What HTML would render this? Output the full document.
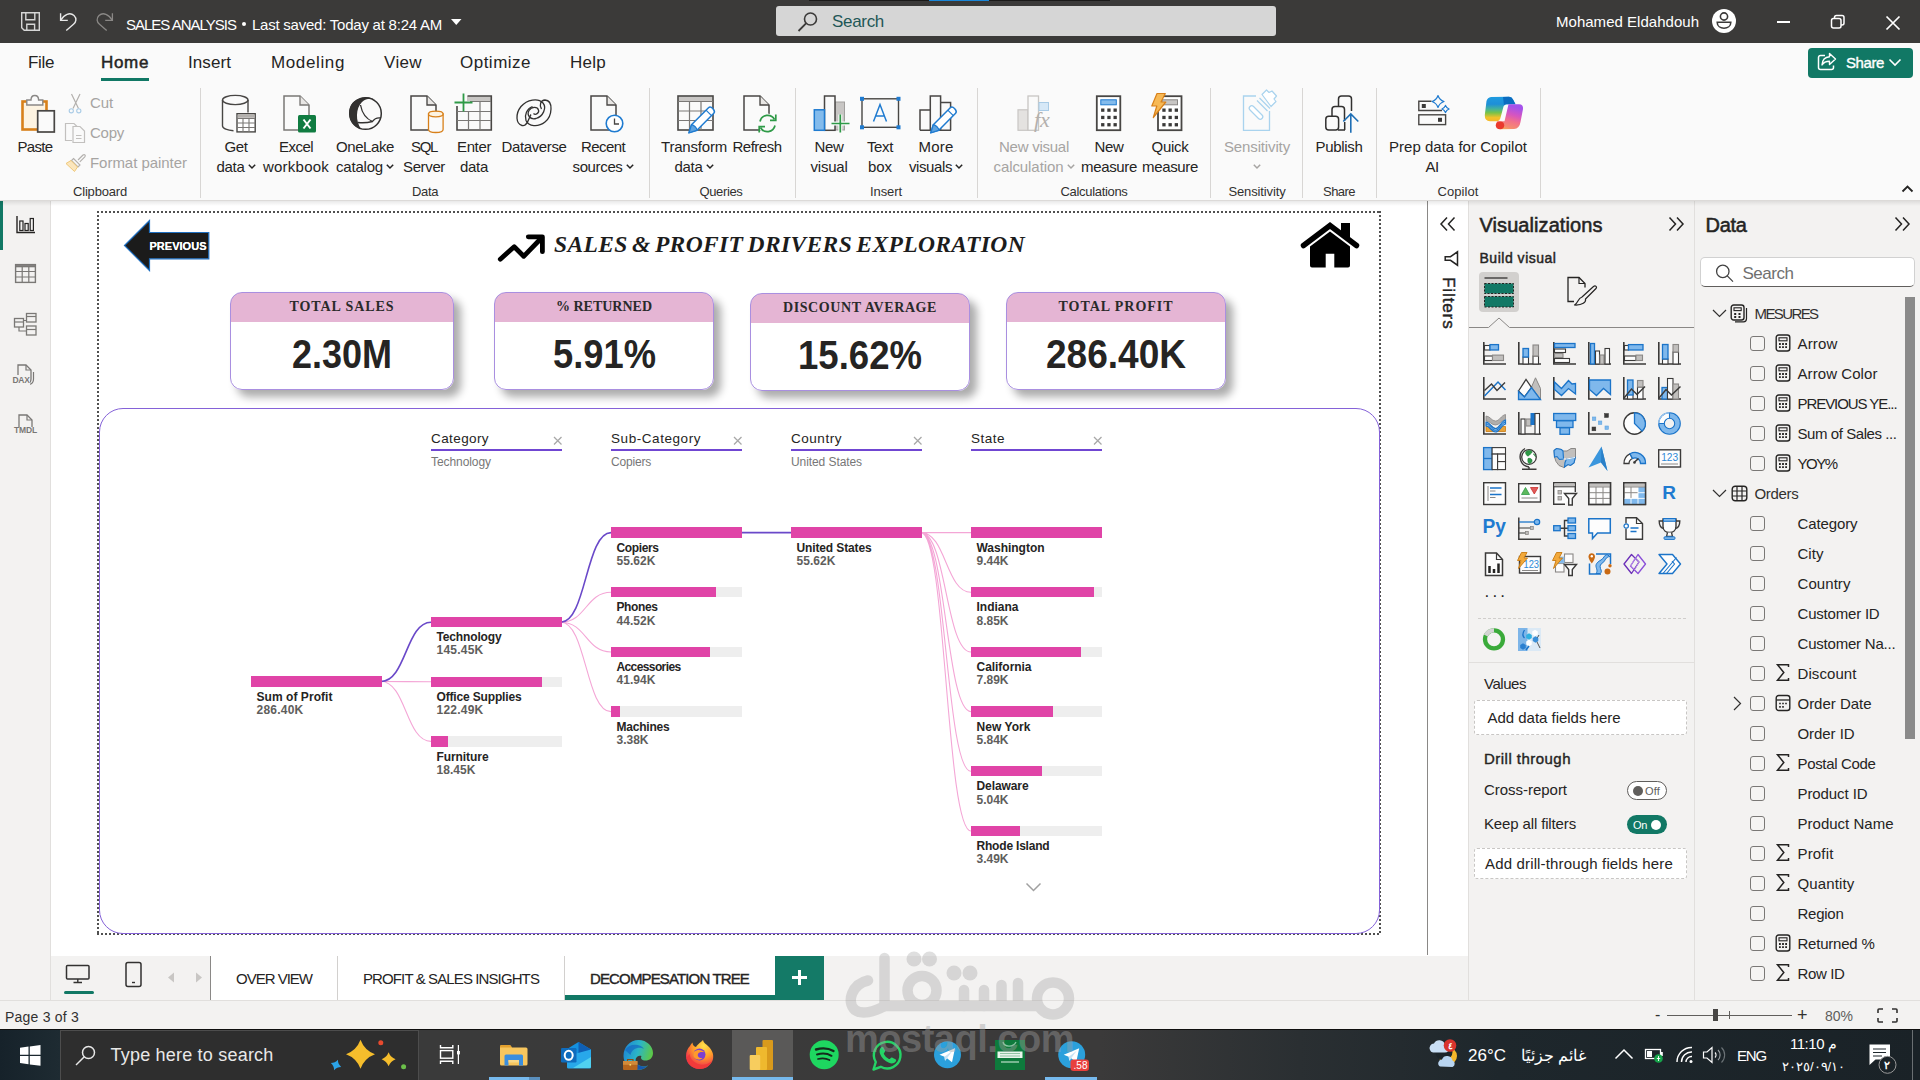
<!DOCTYPE html>
<html><head><meta charset="utf-8"><title>Power BI</title>
<style>
html,body{margin:0;padding:0;}
body{width:1920px;height:1080px;overflow:hidden;position:relative;background:#fff;font-family:"Liberation Sans",sans-serif;}
div,svg{box-sizing:border-box;}
svg{overflow:visible;}
</style></head><body>
<div style="position:absolute;left:0px;top:0px;width:1920px;height:43px;background:#3b3a39;"></div>
<div style="position:absolute;left:809px;top:0px;width:301px;height:1px;background:#1b1a19;"></div>
<div style="position:absolute;left:929px;top:0px;width:60px;height:1px;background:#1a86d8;"></div>
<svg style="position:absolute;left:0px;top:0px;" width="140" height="43" viewBox="0 0 140 43"><path d="M21.700 12.800H39.300V30.200H24.200L21.700 27.700Z" fill="none" stroke="#d6d6d6" stroke-width="1.400" stroke-linejoin="miter"/><path d="M25.800 12.800V19.800H34.800V12.800M26.800 30.200V24.300H34.600V30.200" fill="none" stroke="#d6d6d6" stroke-width="1.400"/><path d="M60.600 13.200V20.400H67.800" fill="none" stroke="#e8e8e8" stroke-width="1.400"/><path d="M60.800 20.200C64 14.500 70 11.700 74 15.500C77 18.500 76.200 22 73.500 24.300L66.300 30.500" fill="none" stroke="#e8e8e8" stroke-width="1.400"/><path d="M112.400 13.200V20.400H105.200" fill="none" stroke="#8a8886" stroke-width="1.300"/><path d="M112.200 20.200C109 14.500 103 11.700 99 15.500C96 18.500 96.800 22 99.500 24.300L106.700 30.500" fill="none" stroke="#8a8886" stroke-width="1.300"/></svg>
<div style="position:absolute;top:14.5px;font-size:15px;line-height:20px;color:#fff;white-space:pre;letter-spacing:-0.997px;left:126.0px;">SALES ANALYSIS</div>
<div style="position:absolute;left:242px;top:22px;width:4px;height:4px;background:#fff;border-radius:2px;"></div>
<div style="position:absolute;top:14.5px;font-size:15px;line-height:20px;color:#fff;white-space:pre;letter-spacing:-0.233px;left:252.0px;">Last saved: Today at 8:24 AM</div>
<svg style="position:absolute;left:451px;top:19px;" width="11" height="7" viewBox="0 0 11 7"><path d="M0 0h10.5L5.25 6z" fill="#fff"/></svg>
<div style="position:absolute;left:776px;top:6px;width:500px;height:30px;background:#d6d6d6;border-radius:3px;"></div>
<svg style="position:absolute;left:796px;top:10px;" width="24" height="24" viewBox="0 0 24 24"><circle cx="14.5" cy="9" r="6" fill="none" stroke="#3b3a39" stroke-width="1.6"/><path d="M10.3 13.2L2.5 21" stroke="#3b3a39" stroke-width="1.8" fill="none"/></svg>
<div style="position:absolute;top:11.0px;font-size:17px;line-height:22px;color:#1f5757;white-space:pre;letter-spacing:-0.311px;left:832.0px;">Search</div>
<div style="position:absolute;top:12.0px;font-size:15px;line-height:20px;color:#fff;white-space:pre;letter-spacing:0.023px;left:1556.0px;">Mohamed Eldahdouh</div>
<svg style="position:absolute;left:1710px;top:7px;" width="28" height="28" viewBox="0 0 28 28"><circle cx="14" cy="14" r="12" fill="#fff"/><circle cx="14" cy="9.5" r="3.6" fill="none" stroke="#3b3a39" stroke-width="1.6"/><path d="M7.2 15.2h13.6c0 8-13.6 8-13.6 0z" fill="none" stroke="#3b3a39" stroke-width="1.6"/></svg>
<div style="position:absolute;left:1777px;top:21.3px;width:13px;height:1.4px;background:#fff;"></div>
<svg style="position:absolute;left:1830px;top:14px;" width="16" height="16" viewBox="0 0 16 16"><rect x="1.5" y="4.5" width="9.5" height="9.5" rx="2" fill="none" stroke="#fff" stroke-width="1.5"/><path d="M4.5 4.5V3.5a2 2 0 0 1 2-2h5.5a2 2 0 0 1 2 2V9a2 2 0 0 1-2 2h-1" fill="none" stroke="#fff" stroke-width="1.5"/></svg>
<svg style="position:absolute;left:1885px;top:15px;" width="16" height="16" viewBox="0 0 16 16"><path d="M1.5 1.5l13 13M14.5 1.5l-13 13" stroke="#fff" stroke-width="1.7"/></svg>
<div style="position:absolute;left:0px;top:43px;width:1920px;height:157px;background:#fafafa;"></div>
<div style="position:absolute;top:52.0px;font-size:17px;line-height:22px;color:#252423;white-space:pre;letter-spacing:-0.348px;left:28.0px;">File</div>
<div style="position:absolute;top:52.0px;font-size:17px;line-height:22px;color:#252423;white-space:pre;-webkit-text-stroke:0.5px #252423;letter-spacing:0.663px;left:101.0px;">Home</div>
<div style="position:absolute;top:52.0px;font-size:17px;line-height:22px;color:#252423;white-space:pre;letter-spacing:0.080px;left:188.0px;">Insert</div>
<div style="position:absolute;top:52.0px;font-size:17px;line-height:22px;color:#252423;white-space:pre;letter-spacing:0.627px;left:271.0px;">Modeling</div>
<div style="position:absolute;top:52.0px;font-size:17px;line-height:22px;color:#252423;white-space:pre;letter-spacing:0.365px;left:384.0px;">View</div>
<div style="position:absolute;top:52.0px;font-size:17px;line-height:22px;color:#252423;white-space:pre;letter-spacing:0.491px;left:460.0px;">Optimize</div>
<div style="position:absolute;top:52.0px;font-size:17px;line-height:22px;color:#252423;white-space:pre;letter-spacing:0.259px;left:570.0px;">Help</div>
<div style="position:absolute;left:101px;top:78px;width:48px;height:3px;background:#117865;"></div>
<div style="position:absolute;left:1808px;top:48px;width:105px;height:29.5px;background:#117865;border-radius:4px;"></div>
<svg style="position:absolute;left:1816px;top:52px;" width="22" height="20" viewBox="0 0 22 20"><path d="M9 3.5H4.5a2 2 0 0 0-2 2v10a2 2 0 0 0 2 2h11a2 2 0 0 0 2-2v-2" fill="none" stroke="#fff" stroke-width="1.5"/><path d="M13.5 1.5l6 5.5-6 5.5V9.2C9.5 9.2 7.5 10.5 6 13c.3-5 3-8 7.500-8.300z" fill="none" stroke="#fff" stroke-width="1.4" stroke-linejoin="round"/></svg>
<div style="position:absolute;top:52.5px;font-size:15px;line-height:20px;color:#fff;white-space:pre;-webkit-text-stroke:0.35px #fff;letter-spacing:-0.405px;left:1846.0px;">Share</div>
<svg style="position:absolute;left:1888px;top:58px;" width="14" height="9" viewBox="0 0 14 9"><path d="M1.5 1.5l5.5 5.5 5.500-5.500" fill="none" stroke="#fff" stroke-width="1.6"/></svg>
<div style="position:absolute;left:200px;top:88px;width:1px;height:110px;background:#d8d6d4;"></div>
<div style="position:absolute;left:649px;top:88px;width:1px;height:110px;background:#d8d6d4;"></div>
<div style="position:absolute;left:795px;top:88px;width:1px;height:110px;background:#d8d6d4;"></div>
<div style="position:absolute;left:977px;top:88px;width:1px;height:110px;background:#d8d6d4;"></div>
<div style="position:absolute;left:1210px;top:88px;width:1px;height:110px;background:#d8d6d4;"></div>
<div style="position:absolute;left:1302px;top:88px;width:1px;height:110px;background:#d8d6d4;"></div>
<div style="position:absolute;left:1376px;top:88px;width:1px;height:110px;background:#d8d6d4;"></div>
<div style="position:absolute;left:1540px;top:88px;width:1px;height:110px;background:#d8d6d4;"></div>
<div style="position:absolute;top:182.5px;font-size:13px;line-height:17px;color:#323130;white-space:pre;letter-spacing:-0.182px;left:73.0px;">Clipboard</div>
<div style="position:absolute;top:182.5px;font-size:13px;line-height:17px;color:#323130;white-space:pre;letter-spacing:-0.365px;left:412.0px;">Data</div>
<div style="position:absolute;top:182.5px;font-size:13px;line-height:17px;color:#323130;white-space:pre;letter-spacing:-0.360px;left:699.5px;">Queries</div>
<div style="position:absolute;top:182.5px;font-size:13px;line-height:17px;color:#323130;white-space:pre;letter-spacing:-0.086px;left:870.0px;">Insert</div>
<div style="position:absolute;top:182.5px;font-size:13px;line-height:17px;color:#323130;white-space:pre;letter-spacing:-0.318px;left:1060.5px;">Calculations</div>
<div style="position:absolute;top:182.5px;font-size:13px;line-height:17px;color:#323130;white-space:pre;letter-spacing:-0.138px;left:1228.5px;">Sensitivity</div>
<div style="position:absolute;top:182.5px;font-size:13px;line-height:17px;color:#323130;white-space:pre;letter-spacing:-0.538px;left:1323.0px;">Share</div>
<div style="position:absolute;top:182.5px;font-size:13px;line-height:17px;color:#323130;white-space:pre;letter-spacing:0.077px;left:1437.5px;">Copilot</div>
<svg style="position:absolute;left:1901px;top:184px;" width="13" height="9" viewBox="0 0 13 9"><path d="M1.5 7.500l5-5 5 5" fill="none" stroke="#252423" stroke-width="1.8"/></svg>
<div style="position:absolute;top:136.5px;font-size:15px;line-height:20px;color:#252423;white-space:pre;letter-spacing:-0.671px;left:17.5px;">Paste</div>
<div style="position:absolute;top:92.5px;font-size:15px;line-height:20px;color:#a6a4a2;white-space:pre;letter-spacing:-0.114px;left:90.0px;">Cut</div>
<div style="position:absolute;top:122.5px;font-size:15px;line-height:20px;color:#a6a4a2;white-space:pre;letter-spacing:-0.254px;left:90.0px;">Copy</div>
<div style="position:absolute;top:152.5px;font-size:15px;line-height:20px;color:#a6a4a2;white-space:pre;letter-spacing:-0.038px;left:90.0px;">Format painter</div>
<div style="position:absolute;top:136.5px;font-size:15px;line-height:20px;color:#252423;white-space:pre;letter-spacing:-0.392px;left:224.5px;">Get</div>
<div style="position:absolute;top:156.5px;font-size:15px;line-height:20px;color:#252423;white-space:pre;letter-spacing:-0.298px;left:216.5px;">data</div>
<svg style="position:absolute;left:247.5px;top:164px;" width="8" height="6" viewBox="0 0 8 6"><path d="M0.8 0.800l3.200 3.200 3.200-3.200" fill="none" stroke="#252423" stroke-width="1.5"/></svg>
<div style="position:absolute;top:136.5px;font-size:15px;line-height:20px;color:#252423;white-space:pre;letter-spacing:-0.536px;left:279.0px;">Excel</div>
<div style="position:absolute;top:156.5px;font-size:15px;line-height:20px;color:#252423;white-space:pre;letter-spacing:0.225px;left:263.0px;">workbook</div>
<div style="position:absolute;top:136.5px;font-size:15px;line-height:20px;color:#252423;white-space:pre;letter-spacing:-0.411px;left:336.0px;">OneLake</div>
<div style="position:absolute;top:156.5px;font-size:15px;line-height:20px;color:#252423;white-space:pre;letter-spacing:-0.196px;left:336.0px;">catalog</div>
<svg style="position:absolute;left:386.0px;top:164px;" width="8" height="6" viewBox="0 0 8 6"><path d="M0.8 0.800l3.200 3.200 3.200-3.200" fill="none" stroke="#252423" stroke-width="1.5"/></svg>
<div style="position:absolute;top:136.5px;font-size:15px;line-height:20px;color:#252423;white-space:pre;letter-spacing:-1.338px;left:411.0px;">SQL</div>
<div style="position:absolute;top:156.5px;font-size:15px;line-height:20px;color:#252423;white-space:pre;letter-spacing:-0.363px;left:403.0px;">Server</div>
<div style="position:absolute;top:136.5px;font-size:15px;line-height:20px;color:#252423;white-space:pre;letter-spacing:-0.370px;left:457.0px;">Enter</div>
<div style="position:absolute;top:156.5px;font-size:15px;line-height:20px;color:#252423;white-space:pre;letter-spacing:-0.298px;left:460.0px;">data</div>
<div style="position:absolute;top:136.5px;font-size:15px;line-height:20px;color:#252423;white-space:pre;letter-spacing:-0.374px;left:501.5px;">Dataverse</div>
<div style="position:absolute;top:136.5px;font-size:15px;line-height:20px;color:#252423;white-space:pre;letter-spacing:-0.588px;left:581.0px;">Recent</div>
<div style="position:absolute;top:156.5px;font-size:15px;line-height:20px;color:#252423;white-space:pre;letter-spacing:-0.360px;left:572.5px;">sources</div>
<svg style="position:absolute;left:625.5px;top:164px;" width="8" height="6" viewBox="0 0 8 6"><path d="M0.8 0.800l3.200 3.200 3.200-3.200" fill="none" stroke="#252423" stroke-width="1.5"/></svg>
<div style="position:absolute;top:136.5px;font-size:15px;line-height:20px;color:#252423;white-space:pre;letter-spacing:-0.198px;left:661.0px;">Transform</div>
<div style="position:absolute;top:156.5px;font-size:15px;line-height:20px;color:#252423;white-space:pre;letter-spacing:-0.298px;left:674.5px;">data</div>
<svg style="position:absolute;left:705.5px;top:164px;" width="8" height="6" viewBox="0 0 8 6"><path d="M0.8 0.800l3.200 3.200 3.200-3.200" fill="none" stroke="#252423" stroke-width="1.5"/></svg>
<div style="position:absolute;top:136.5px;font-size:15px;line-height:20px;color:#252423;white-space:pre;letter-spacing:-0.503px;left:732.5px;">Refresh</div>
<div style="position:absolute;top:136.5px;font-size:15px;line-height:20px;color:#252423;white-space:pre;letter-spacing:-0.336px;left:814.5px;">New</div>
<div style="position:absolute;top:156.5px;font-size:15px;line-height:20px;color:#252423;white-space:pre;letter-spacing:-0.225px;left:810.5px;">visual</div>
<div style="position:absolute;top:136.5px;font-size:15px;line-height:20px;color:#252423;white-space:pre;letter-spacing:-0.377px;left:867.0px;">Text</div>
<div style="position:absolute;top:156.5px;font-size:15px;line-height:20px;color:#252423;white-space:pre;letter-spacing:-0.061px;left:868.0px;">box</div>
<div style="position:absolute;top:136.5px;font-size:15px;line-height:20px;color:#252423;white-space:pre;letter-spacing:0.206px;left:918.5px;">More</div>
<div style="position:absolute;top:156.5px;font-size:15px;line-height:20px;color:#252423;white-space:pre;letter-spacing:-0.407px;left:909.0px;">visuals</div>
<svg style="position:absolute;left:955.0px;top:164px;" width="8" height="6" viewBox="0 0 8 6"><path d="M0.8 0.800l3.200 3.200 3.200-3.200" fill="none" stroke="#252423" stroke-width="1.5"/></svg>
<div style="position:absolute;top:136.5px;font-size:15px;line-height:20px;color:#a6a4a2;white-space:pre;letter-spacing:-0.253px;left:999.0px;">New visual</div>
<div style="position:absolute;top:156.5px;font-size:15px;line-height:20px;color:#a6a4a2;white-space:pre;letter-spacing:-0.080px;left:993.5px;">calculation</div>
<svg style="position:absolute;left:1066.5px;top:164px;" width="8" height="6" viewBox="0 0 8 6"><path d="M0.8 0.800l3.200 3.200 3.200-3.200" fill="none" stroke="#a6a4a2" stroke-width="1.5"/></svg>
<div style="position:absolute;top:136.5px;font-size:15px;line-height:20px;color:#252423;white-space:pre;letter-spacing:-0.336px;left:1094.5px;">New</div>
<div style="position:absolute;top:156.5px;font-size:15px;line-height:20px;color:#252423;white-space:pre;letter-spacing:-0.337px;left:1081.0px;">measure</div>
<div style="position:absolute;top:136.5px;font-size:15px;line-height:20px;color:#252423;white-space:pre;letter-spacing:-0.268px;left:1151.5px;">Quick</div>
<div style="position:absolute;top:156.5px;font-size:15px;line-height:20px;color:#252423;white-space:pre;letter-spacing:-0.337px;left:1142.0px;">measure</div>
<div style="position:absolute;top:136.5px;font-size:15px;line-height:20px;color:#a6a4a2;white-space:pre;letter-spacing:-0.138px;left:1224.0px;">Sensitivity</div>
<svg style="position:absolute;left:1253px;top:164px;" width="8" height="6" viewBox="0 0 8 6"><path d="M0.8 0.800l3.200 3.200 3.200-3.200" fill="none" stroke="#a6a4a2" stroke-width="1.5"/></svg>
<div style="position:absolute;top:136.5px;font-size:15px;line-height:20px;color:#252423;white-space:pre;letter-spacing:-0.314px;left:1315.5px;">Publish</div>
<div style="position:absolute;top:136.5px;font-size:15px;line-height:20px;color:#252423;white-space:pre;letter-spacing:0.020px;left:1389.0px;">Prep data for Copilot</div>
<div style="position:absolute;top:156.5px;font-size:15px;line-height:20px;color:#252423;white-space:pre;letter-spacing:-0.586px;left:1425.5px;">AI</div>
<svg style="position:absolute;left:0px;top:0px;" width="1920" height="210" viewBox="0 0 1920 210"><rect x="22.500" y="101.500" width="24" height="28" fill="#fdf3e1" stroke="#d8801a" stroke-width="2.600"/><path d="M26.800 105V100h4.200c0-6 7.600-6 7.600 0h4.200v5z" fill="#fafafa" stroke="#8a8886" stroke-width="1.400"/><rect x="37.700" y="110.800" width="16.600" height="21.200" fill="#fafafa" stroke="#484644" stroke-width="1.700"/><path d="M71.500 94L78.500 108.500M80 94L73 108.500" stroke="#b3b0ad" stroke-width="1.200" fill="none"/><circle cx="71.300" cy="110.800" r="2.100" fill="none" stroke="#a9cbe6" stroke-width="1.100"/><circle cx="78.800" cy="110.800" r="2.100" fill="none" stroke="#a9cbe6" stroke-width="1.100"/><path d="M72 140.500H65.500V123.500H74l3 3" fill="none" stroke="#c2c0be" stroke-width="1.200"/><path d="M73 126.500h7l4.500 4.500V142.500H73z" fill="#fafafa" stroke="#c2c0be" stroke-width="1.200"/><path d="M76 135.500h5.500M76 138.500h5.500" stroke="#c2c0be" stroke-width="1"/><path d="M78 160l5-5c1.500-1.200 3 .3 1.800 1.800l-5 5" fill="none" stroke="#b3b0ad" stroke-width="1.200"/><path d="M73.500 158.500l6.500 6.500-2 2-6.500-6.500z" fill="none" stroke="#b3b0ad" stroke-width="1.100"/><path d="M71 160.500L66 163.500L74.500 171.500L77.500 167Z" fill="#fbe6bd" stroke="#f0c878" stroke-width="1"/><path d="M222.500 100v26c0 2.500 5 4.500 11 4.800M248 100v12.500" fill="none" stroke="#484644" stroke-width="1.400"/><ellipse cx="235.250" cy="100" rx="12.750" ry="4.600" fill="none" stroke="#484644" stroke-width="1.400"/><rect x="237" y="113.700" width="18.200" height="18.200" fill="#fff" stroke="#484644" stroke-width="1.400"/><rect x="237.700" y="114.400" width="16.800" height="3.400" fill="#b3b0ad"/><path d="M237 118.500h18.200M237 123h18.200M237 127.500h18.200M243 118.500v13.400M249 118.500v13.400" stroke="#7a7876" stroke-width="1.100"/><path d="M284 96H300L309 105V130H284Z" fill="none" stroke="#7a7876" stroke-width="1.5" stroke-linejoin="miter"/><path d="M300 96V105H309" fill="#e8e6e4" stroke="#7a7876" stroke-width="1.35"/><rect x="298" y="115" width="18" height="17.600" rx="1.500" fill="#107c41"/><path d="M303.500 119.500l7 9M310.500 119.500l-7 9" stroke="#fff" stroke-width="2"/><circle cx="365.500" cy="113.500" r="15.800" fill="none" stroke="#323130" stroke-width="1.500"/><path d="M360 98.700C352 100 347.500 108 349.800 117.500C351 123 355.500 127.500 361 129C355.500 121 355.500 108.500 362 102C366 98.500 371 98 375 100C371 96.500 365 96.500 360 98.700Z" fill="#323130"/><path d="M360.500 105C362 113 366.500 119 372.500 121.500C374.500 118.500 378 117.500 381 118" fill="none" stroke="#323130" stroke-width="1.300"/><path d="M358 122.500C363 123 368.500 122.500 372.500 121.500" fill="none" stroke="#323130" stroke-width="1.300"/><path d="M411 96H427L436 105V130H411Z" fill="none" stroke="#484644" stroke-width="1.5" stroke-linejoin="miter"/><path d="M427 96V105H436" fill="#e8e6e4" stroke="#484644" stroke-width="1.35"/><path d="M428.500 114v15.500c0 1.800 3.300 3 7.300 3s7.300-1.200 7.300-3V114z" fill="#fafafa" stroke="#d8801a" stroke-width="1.300"/><ellipse cx="435.800" cy="114" rx="7.300" ry="2.800" fill="#fdf3e1" stroke="#d8801a" stroke-width="1.300"/><rect x="467" y="96.200" width="24" height="4.800" fill="#c8c6c4"/><path d="M467.500 96H491.300V130H457V106" fill="none" stroke="#484644" stroke-width="1.600"/><path d="M470 101.500h21M457 111.500h34M457 120.500h34M468.500 111.500v18.500M480 101.500V130" stroke="#7a7876" stroke-width="1.200"/><path d="M463.500 93.500v18M454.500 102.500h18" stroke="#2e9a47" stroke-width="1.800"/><path d="M522 125.500C516 124 515 114 521 106.500C527 99.500 538 97.500 543 103C547 108 543 116.500 536 118.500C530 120 526.500 115 529 110.500C531.500 106.500 537.500 106.500 538.500 110C539.500 113 535.500 115.500 533.500 113.500" fill="none" stroke="#323130" stroke-width="1.300"/><path d="M522 125.500C527.500 127 528.500 118 531 114.500M545 100C553.500 100.500 552.500 116 545 122C538 127.500 528.500 126.500 526 120.500C524 115 527 108.500 532.500 106.500M545 100C540.500 100 539 105.500 541.500 109" fill="none" stroke="#323130" stroke-width="1.300"/><path d="M591 96H607L616 105V130H591Z" fill="none" stroke="#484644" stroke-width="1.5" stroke-linejoin="miter"/><path d="M607 96V105H616" fill="#e8e6e4" stroke="#484644" stroke-width="1.35"/><circle cx="614.500" cy="123.500" r="8.300" fill="#fff" stroke="#1f7bd0" stroke-width="1.600"/><path d="M614.500 118.500v5.500h4.500" fill="none" stroke="#484644" stroke-width="1.300"/><rect x="678.500" y="96.300" width="34" height="4.700" fill="#c8c6c4"/><rect x="678" y="96" width="35" height="34" fill="none" stroke="#484644" stroke-width="1.600"/><path d="M678 101.500h35M678 111h35M678 120.500h35M689.500 101.500V130M701 101.500V130" stroke="#7a7876" stroke-width="1.200"/><path d="M689 132.7L691.5 124.69999999999999L708.5 107.69999999999999C711 105.49999999999999 716 110.69999999999999 713.8 113.19999999999999L697 130.2Z" fill="#fff" stroke="#1f7bd0" stroke-width="1.500" stroke-linejoin="round"/><path d="M689 132.7L691.5 124.69999999999999C694 125.19999999999999 697 127.69999999999999 697 130.2Z" fill="#5ea3e0" stroke="#1f7bd0" stroke-width="1.200"/><path d="M706 110.19999999999999l5.500 5.500" stroke="#1f7bd0" stroke-width="1.200"/><path d="M744 96H760L769 105V130H744Z" fill="none" stroke="#484644" stroke-width="1.5" stroke-linejoin="miter"/><path d="M760 96V105H769" fill="#e8e6e4" stroke="#484644" stroke-width="1.35"/><circle cx="767.500" cy="123.500" r="10" fill="#fafafa"/><path d="M760 121.500A7.800 7.800 0 0 1 774.500 119.500M775 125.500A7.800 7.800 0 0 1 760.500 127.500" fill="none" stroke="#2e9a47" stroke-width="1.700"/><path d="M775.800 114.500v5.800h-5.800M759.200 132.500v-5.800h5.800" fill="none" stroke="#2e9a47" stroke-width="1.700"/><rect x="835" y="102" width="9.500" height="28" fill="#c8c6c4" stroke="#a19f9d" stroke-width="1"/><rect x="824.500" y="96" width="10.500" height="34.300" fill="#fafafa" stroke="#484644" stroke-width="1.500"/><rect x="814.300" y="109.800" width="10.200" height="20.500" fill="#83bbec" stroke="#1f7bd0" stroke-width="1.500"/><path d="M840.300 114.500v18M831.500 123.500h18" stroke="#fafafa" stroke-width="4"/><path d="M840.300 114.500v18M831.500 123.500h18" stroke="#2e9a47" stroke-width="1.700"/><rect x="862" y="98.800" width="36.500" height="28.500" fill="none" stroke="#484644" stroke-width="1.400"/><rect x="860" y="96.8" width="4" height="4" fill="#1f7bd0"/><rect x="896.5" y="96.8" width="4" height="4" fill="#1f7bd0"/><rect x="860" y="125.3" width="4" height="4" fill="#1f7bd0"/><rect x="896.5" y="125.3" width="4" height="4" fill="#1f7bd0"/><path d="M873.500 121.500L880 104.500L886.500 121.500M875.800 116h8.400" fill="none" stroke="#1f7bd0" stroke-width="1.500"/><path d="M920 130.300V110h10.300M930.300 130.300V96h10.300V130.300M940.600 102.500h10V130.300M920 130.300h31" fill="none" stroke="#484644" stroke-width="1.500"/><path d="M930.8 132.7L933.3 124.69999999999999L950.3 107.69999999999999C952.8 105.49999999999999 957.8 110.69999999999999 955.5999999999999 113.19999999999999L938.8 130.2Z" fill="#fff" stroke="#1f7bd0" stroke-width="1.500" stroke-linejoin="round"/><path d="M930.8 132.7L933.3 124.69999999999999C935.8 125.19999999999999 938.8 127.69999999999999 938.8 130.2Z" fill="#5ea3e0" stroke="#1f7bd0" stroke-width="1.200"/><path d="M947.8 110.19999999999999l5.500 5.500" stroke="#1f7bd0" stroke-width="1.200"/><rect x="1018" y="109.800" width="10" height="20.500" fill="#e4e2e0" stroke="#c8c6c4" stroke-width="1.200"/><rect x="1028" y="96" width="10.500" height="34.300" fill="#fafafa" stroke="#c8c6c4" stroke-width="1.300"/><rect x="1039" y="102.500" width="9.500" height="8" fill="#d6e8f7" stroke="#a9cbe6" stroke-width="1"/><text x="1034" y="127" font-family="Liberation Serif,serif" font-style="italic" font-size="22" fill="#b3b0ad">fx</text><rect x="1096.8" y="96.200" width="23.500" height="34" fill="#fff" stroke="#484644" stroke-width="1.800"/><rect x="1100.8" y="99.800" width="15.500" height="5" fill="#83bbec" stroke="#1f7bd0" stroke-width="1"/><rect x="1101.1" y="108.5" width="3.300" height="3.300" fill="#3b3a39"/><rect x="1107.3" y="108.5" width="3.300" height="3.300" fill="#3b3a39"/><rect x="1113.5" y="108.5" width="3.300" height="3.300" fill="#3b3a39"/><rect x="1101.1" y="115.8" width="3.300" height="3.300" fill="#3b3a39"/><rect x="1107.3" y="115.8" width="3.300" height="3.300" fill="#3b3a39"/><rect x="1113.5" y="115.8" width="3.300" height="3.300" fill="#3b3a39"/><rect x="1101.1" y="123.1" width="3.300" height="3.300" fill="#3b3a39"/><rect x="1107.3" y="123.1" width="3.300" height="3.300" fill="#3b3a39"/><rect x="1113.5" y="123.1" width="3.300" height="3.300" fill="#3b3a39"/><rect x="1158" y="96.200" width="23.500" height="34" fill="#fff" stroke="#484644" stroke-width="1.800"/><rect x="1162" y="99.800" width="15.500" height="5" fill="#c8c6c4" stroke="#8a8886" stroke-width="1"/><rect x="1162.3" y="108.5" width="3.300" height="3.300" fill="#3b3a39"/><rect x="1168.5" y="108.5" width="3.300" height="3.300" fill="#3b3a39"/><rect x="1174.7" y="108.5" width="3.300" height="3.300" fill="#3b3a39"/><rect x="1162.3" y="115.8" width="3.300" height="3.300" fill="#3b3a39"/><rect x="1168.5" y="115.8" width="3.300" height="3.300" fill="#3b3a39"/><rect x="1174.7" y="115.8" width="3.300" height="3.300" fill="#3b3a39"/><rect x="1162.3" y="123.1" width="3.300" height="3.300" fill="#3b3a39"/><rect x="1168.5" y="123.1" width="3.300" height="3.300" fill="#3b3a39"/><rect x="1174.7" y="123.1" width="3.300" height="3.300" fill="#3b3a39"/><path d="M1157 93.500h8.300l-4.300 8.500h4.800l-12.500 15.500 3.500-11.500h-5z" fill="#f7b955" stroke="#d8801a" stroke-width="1.200" stroke-linejoin="round"/><path d="M1256 96h-12.500v34.300h26V111" fill="none" stroke="#a9d3ee" stroke-width="1.300"/><path d="M1262 94.500l4.500-4.500 2.500 2.500 3-1.500 4.500 5-2.500 3 2 2.500-5 5z" fill="#fff" stroke="#a9d3ee" stroke-width="1.200" stroke-linejoin="round"/><path d="M1259.500 98l10.500 10.500M1257 100.500l10.500 10.500" stroke="#a9d3ee" stroke-width="1.200"/><rect x="1247.500" y="110" width="17" height="5" rx="2.500" transform="rotate(45 1256 112.500)" fill="#fff" stroke="#a9d3ee" stroke-width="1.200"/><path d="M1338.500 106V99a3 3 0 0 1 3-3h7a3 3 0 0 1 3 3v12" fill="none" stroke="#323130" stroke-width="1.500"/><path d="M1332 116v-6.500a3 3 0 0 1 3-3h6.500a3 3 0 0 1 3 3V121" fill="none" stroke="#323130" stroke-width="1.500"/><path d="M1345 130h-7M1344.700 122v8" fill="none" stroke="#323130" stroke-width="1.500"/><rect x="1325.800" y="116.200" width="12.800" height="13.800" rx="3" fill="none" stroke="#323130" stroke-width="1.500"/><path d="M1350.800 132.700V114.500M1343.300 121.500l7.500-7.500 7.500 7.500" fill="none" stroke="#1f6fb5" stroke-width="1.600"/><path d="M1431.500 101.300H1418.800V110.500H1442" fill="none" stroke="#484644" stroke-width="1.400"/><rect x="1418.800" y="114.800" width="26.800" height="9.800" fill="none" stroke="#484644" stroke-width="1.400"/><rect x="1421.800" y="104" width="4" height="4" fill="#3b3a39"/><rect x="1438" y="117.800" width="4" height="4" fill="#3b3a39"/><path d="M1438 95.5Q1439.5 100.0 1444 101.5Q1439.5 103.0 1438 107.5Q1436.5 103.0 1432 101.5Q1436.5 100.0 1438 95.5Z" fill="#fafafa" stroke="#1f7bd0" stroke-width="1.200" stroke-linejoin="round"/><path d="M1445.5 105.4Q1446.4 108.1 1449.1 109Q1446.4 109.9 1445.5 112.6Q1444.6 109.9 1441.9 109Q1444.6 108.1 1445.5 105.4Z" fill="#fafafa" stroke="#1f7bd0" stroke-width="1.200" stroke-linejoin="round"/><defs><linearGradient id="cpa" x1="0" y1="0" x2="0" y2="1"><stop offset="0" stop-color="#1e9be0"/><stop offset="0.300" stop-color="#1e8fd8"/><stop offset="0.500" stop-color="#45b39a"/><stop offset="0.650" stop-color="#76c24a"/><stop offset="0.850" stop-color="#f2c22a"/><stop offset="1" stop-color="#f5b82a"/></linearGradient><linearGradient id="cpb" x1="0.300" y1="0" x2="0" y2="1"><stop offset="0" stop-color="#a552ea"/><stop offset="0.300" stop-color="#d655c0"/><stop offset="0.550" stop-color="#f2708a"/><stop offset="0.800" stop-color="#f58a70"/><stop offset="1" stop-color="#f7c04a"/></linearGradient></defs><path d="M1491 97Q1487.500 97.500 1486.500 101L1484.800 115Q1484.500 121 1490 121.300L1497 121.300Q1499.500 121 1500.300 118.500L1503.500 106.500Q1504 104.500 1506.500 104.300L1515.500 104.300L1513 99.500Q1512 97 1509 96.800Z" fill="url(#cpa)"/><path d="M1503 96.900L1509 96.800Q1512 97 1513 99.500L1515.500 104.300L1506.500 104.300Q1504.500 104.300 1504 105.500Z" fill="#0b6cc0"/><path d="M1508.500 104.300L1519 104.300Q1523.500 104.500 1523 109L1520.500 122Q1519.500 128.500 1514 129L1500 129.200Q1496 128 1496.500 124L1497 121.300L1504.500 121.300Z" fill="url(#cpb)"/><ellipse cx="1500" cy="125.300" rx="4.200" ry="3.900" fill="#ea3a2e"/></svg>
<div style="position:absolute;left:97px;top:211px;width:1284px;height:2px;background:repeating-linear-gradient(90deg,#505050 0 2px,transparent 2px 4px);"></div>
<div style="position:absolute;left:97px;top:933px;width:1284px;height:2px;background:repeating-linear-gradient(90deg,#505050 0 2px,transparent 2px 4px);"></div>
<div style="position:absolute;left:97px;top:211px;width:2px;height:724px;background:repeating-linear-gradient(180deg,#505050 0 2px,transparent 2px 4px);"></div>
<div style="position:absolute;left:1379px;top:211px;width:2px;height:724px;background:repeating-linear-gradient(180deg,#505050 0 2px,transparent 2px 4px);"></div>
<svg style="position:absolute;left:120px;top:216px;" width="94" height="60" viewBox="0 0 94 60"><path d="M4.500 29.500L29.500 4.500V16.500H88.800V42.800H29.500V54.500Z" fill="#1b1b1b" stroke="#1f6fc0" stroke-width="1.2" stroke-linejoin="miter"/></svg>
<div style="position:absolute;top:239.0px;font-size:11px;line-height:14px;color:#fff;white-space:pre;font-weight:bold;letter-spacing:0.019px;left:149.5px;text-shadow:0 0 0.6px #fff;">PREVIOUS</div>
<svg style="position:absolute;left:494px;top:230px;" width="56" height="36" viewBox="0 0 56 36"><path d="M6.300 29.200L20.200 16.700L29.700 26.300L46.500 9" fill="none" stroke="#000" stroke-width="4.800" stroke-linecap="round" stroke-linejoin="round"/><path d="M34.300 6.800H48.400V21.700" fill="none" stroke="#000" stroke-width="4.800" stroke-linecap="round" stroke-linejoin="round"/></svg>
<div style="position:absolute;top:229.3px;font-size:23.5px;line-height:31px;color:#1c1c1c;white-space:pre;font-family:'Liberation Serif',serif;font-weight:bold;font-style:italic;letter-spacing:0.376px;word-spacing:-2px;left:554.0px;">SALES &amp; PROFIT DRIVERS EXPLORATION</div>
<svg style="position:absolute;left:1300px;top:220px;" width="60" height="50" viewBox="0 0 60 50"><path d="M3.500 25.500L30 5.500L56.500 25.500" fill="none" stroke="#000" stroke-width="5.500" stroke-linecap="round" stroke-linejoin="miter"/><path d="M41 3h9v16l-9-7z" fill="#000"/><path d="M30 11.500L50 26.500V45.500a2 2 0 0 1-2 2H34.300V33.800H25.700V47.500H12a2 2 0 0 1-2-2V26.500Z" fill="#000"/></svg>
<div style="position:absolute;left:230px;top:292px;width:224px;height:98px;border:1px solid #a98fe0;border-radius:12px;background:linear-gradient(#e5b5d4 0 29px,#fff 29px);box-shadow:7px 7px 9px rgba(0,0,0,0.33);overflow:hidden;"></div>
<div style="position:absolute;top:298.2px;font-size:14px;line-height:18px;color:#2a2a2a;white-space:pre;font-family:'Liberation Serif',serif;font-weight:bold;letter-spacing:0.927px;left:289.5px;">TOTAL SALES</div>
<div style="position:absolute;top:328.2px;font-size:41px;line-height:53px;color:#252423;white-space:pre;font-weight:bold;transform:scaleX(0.8776);transform-origin:0 0;left:292.0px;">2.30M</div>
<div style="position:absolute;left:494px;top:292px;width:220px;height:98px;border:1px solid #a98fe0;border-radius:12px;background:linear-gradient(#e5b5d4 0 29px,#fff 29px);box-shadow:7px 7px 9px rgba(0,0,0,0.33);overflow:hidden;"></div>
<div style="position:absolute;top:298.2px;font-size:14px;line-height:18px;color:#2a2a2a;white-space:pre;font-family:'Liberation Serif',serif;font-weight:bold;letter-spacing:-0.007px;left:556.0px;">% RETURNED</div>
<div style="position:absolute;top:328.2px;font-size:41px;line-height:53px;color:#252423;white-space:pre;font-weight:bold;transform:scaleX(0.8860);transform-origin:0 0;left:552.5px;">5.91%</div>
<div style="position:absolute;left:750px;top:293px;width:220px;height:98px;border:1px solid #a98fe0;border-radius:12px;background:linear-gradient(#e5b5d4 0 29px,#fff 29px);box-shadow:7px 7px 9px rgba(0,0,0,0.33);overflow:hidden;"></div>
<div style="position:absolute;top:299.2px;font-size:14px;line-height:18px;color:#2a2a2a;white-space:pre;font-family:'Liberation Serif',serif;font-weight:bold;letter-spacing:0.589px;left:783.0px;">DISCOUNT AVERAGE</div>
<div style="position:absolute;top:329.2px;font-size:41px;line-height:53px;color:#252423;white-space:pre;font-weight:bold;transform:scaleX(0.8917);transform-origin:0 0;left:798.0px;">15.62%</div>
<div style="position:absolute;left:1006px;top:292px;width:220px;height:98px;border:1px solid #a98fe0;border-radius:12px;background:linear-gradient(#e5b5d4 0 29px,#fff 29px);box-shadow:7px 7px 9px rgba(0,0,0,0.33);overflow:hidden;"></div>
<div style="position:absolute;top:298.2px;font-size:14px;line-height:18px;color:#2a2a2a;white-space:pre;font-family:'Liberation Serif',serif;font-weight:bold;letter-spacing:0.972px;left:1058.5px;">TOTAL PROFIT</div>
<div style="position:absolute;top:328.2px;font-size:41px;line-height:53px;color:#252423;white-space:pre;font-weight:bold;transform:scaleX(0.9032);transform-origin:0 0;left:1046.0px;">286.40K</div>
<div style="position:absolute;left:99px;top:408px;width:1281px;height:526px;border:1px solid #8562d8;border-radius:24px;background:#fff;"></div>
<div style="position:absolute;top:430.3px;font-size:13.5px;line-height:18px;color:#252423;white-space:pre;letter-spacing:0.403px;left:431.0px;">Category</div>
<div style="position:absolute;left:431px;top:449px;width:131px;height:2px;background:#7046d2;"></div>
<svg style="position:absolute;left:553px;top:436px;" width="10" height="10" viewBox="0 0 10 10"><path d="M1 1l7.500 7.500M8.500 1L1 8.500" stroke="#a8a8a8" stroke-width="1.300" fill="none"/></svg>
<div style="position:absolute;top:454.0px;font-size:12px;line-height:16px;color:#777;white-space:pre;letter-spacing:-0.071px;left:431.0px;">Technology</div>
<div style="position:absolute;top:430.3px;font-size:13.5px;line-height:18px;color:#252423;white-space:pre;letter-spacing:0.559px;left:611.0px;">Sub-Category</div>
<div style="position:absolute;left:611px;top:449px;width:131px;height:2px;background:#7046d2;"></div>
<svg style="position:absolute;left:733px;top:436px;" width="10" height="10" viewBox="0 0 10 10"><path d="M1 1l7.500 7.500M8.500 1L1 8.500" stroke="#a8a8a8" stroke-width="1.300" fill="none"/></svg>
<div style="position:absolute;top:454.0px;font-size:12px;line-height:16px;color:#777;white-space:pre;letter-spacing:-0.193px;left:611.0px;">Copiers</div>
<div style="position:absolute;top:430.3px;font-size:13.5px;line-height:18px;color:#252423;white-space:pre;letter-spacing:0.533px;left:791.0px;">Country</div>
<div style="position:absolute;left:791px;top:449px;width:131px;height:2px;background:#7046d2;"></div>
<svg style="position:absolute;left:913px;top:436px;" width="10" height="10" viewBox="0 0 10 10"><path d="M1 1l7.500 7.500M8.500 1L1 8.500" stroke="#a8a8a8" stroke-width="1.300" fill="none"/></svg>
<div style="position:absolute;top:454.0px;font-size:12px;line-height:16px;color:#777;white-space:pre;letter-spacing:-0.080px;left:791.0px;">United States</div>
<div style="position:absolute;top:430.3px;font-size:13.5px;line-height:18px;color:#252423;white-space:pre;letter-spacing:0.496px;left:971.0px;">State</div>
<div style="position:absolute;left:971px;top:449px;width:131px;height:2px;background:#7046d2;"></div>
<svg style="position:absolute;left:1093px;top:436px;" width="10" height="10" viewBox="0 0 10 10"><path d="M1 1l7.500 7.500M8.500 1L1 8.500" stroke="#a8a8a8" stroke-width="1.300" fill="none"/></svg>
<svg style="position:absolute;left:0px;top:0px;pointer-events:none;" width="1920" height="1080" viewBox="0 0 1920 1080"><path d="M381 681.5C406.0 681.5 406.0 681.8000000000001 431 681.8000000000001 M381 681.5C406.0 681.5 406.0 741.4000000000001 431 741.4000000000001 M561 622.2C586.0 622.2 586.0 592.28 611 592.28 M561 622.2C586.0 622.2 586.0 651.96 611 651.96 M561 622.2C586.0 622.2 586.0 711.64 611 711.64 M921 532.6C946.0 532.6 946.0 532.6 971 532.6 M921 532.6C946.0 532.6 946.0 592.28 971 592.28 M921 532.6C946.0 532.6 946.0 651.96 971 651.96 M921 532.6C946.0 532.6 946.0 711.64 971 711.64 M921 532.6C946.0 532.6 946.0 771.32 971 771.32 M921 532.6C946.0 532.6 946.0 831.0 971 831.0" fill="none" stroke="#f4a6d6" stroke-width="1.1"/><path d="M381 681.5C406.0 681.5 406.0 622.2 431 622.2 M561 622.2C586.0 622.2 586.0 532.6 611 532.6 M741 532.6H791" fill="none" stroke="#6a49c9" stroke-width="1.600"/></svg>
<div style="position:absolute;left:251.2px;top:676.3px;width:130.5px;height:10.4px;background:#eeeeee;"></div>
<div style="position:absolute;left:251.2px;top:676.3px;width:130.5px;height:10.4px;background:#e044a7;"></div>
<div style="position:absolute;top:688.6px;font-size:12px;line-height:16px;color:#252423;white-space:pre;font-weight:bold;letter-spacing:0.051px;left:256.5px;">Sum of Profit</div>
<div style="position:absolute;top:701.7px;font-size:12px;line-height:16px;color:#605e5c;white-space:pre;font-weight:bold;letter-spacing:0.233px;left:256.5px;">286.40K</div>
<div style="position:absolute;left:431.2px;top:617.0px;width:130.5px;height:10.4px;background:#eeeeee;"></div>
<div style="position:absolute;left:431.2px;top:617.0px;width:130.5px;height:10.4px;background:#e044a7;"></div>
<div style="position:absolute;top:629.3px;font-size:12px;line-height:16px;color:#252423;white-space:pre;font-weight:bold;letter-spacing:-0.144px;left:436.5px;">Technology</div>
<div style="position:absolute;top:642.4px;font-size:12px;line-height:16px;color:#605e5c;white-space:pre;font-weight:bold;letter-spacing:0.233px;left:436.5px;">145.45K</div>
<div style="position:absolute;left:431.2px;top:676.6px;width:130.5px;height:10.4px;background:#eeeeee;"></div>
<div style="position:absolute;left:431.2px;top:676.6px;width:110.5px;height:10.4px;background:#e044a7;"></div>
<div style="position:absolute;top:688.9px;font-size:12px;line-height:16px;color:#252423;white-space:pre;font-weight:bold;letter-spacing:-0.157px;left:436.5px;">Office Supplies</div>
<div style="position:absolute;top:702.0px;font-size:12px;line-height:16px;color:#605e5c;white-space:pre;font-weight:bold;letter-spacing:0.233px;left:436.5px;">122.49K</div>
<div style="position:absolute;left:431.2px;top:736.2px;width:130.5px;height:10.4px;background:#eeeeee;"></div>
<div style="position:absolute;left:431.2px;top:736.2px;width:16.5px;height:10.4px;background:#e044a7;"></div>
<div style="position:absolute;top:748.5px;font-size:12px;line-height:16px;color:#252423;white-space:pre;font-weight:bold;letter-spacing:-0.074px;left:436.5px;">Furniture</div>
<div style="position:absolute;top:761.6px;font-size:12px;line-height:16px;color:#605e5c;white-space:pre;font-weight:bold;letter-spacing:0.051px;left:436.5px;">18.45K</div>
<div style="position:absolute;left:611.2px;top:527.4px;width:130.5px;height:10.4px;background:#eeeeee;"></div>
<div style="position:absolute;left:611.2px;top:527.4px;width:130.5px;height:10.4px;background:#e044a7;"></div>
<div style="position:absolute;top:539.7px;font-size:12px;line-height:16px;color:#252423;white-space:pre;font-weight:bold;letter-spacing:-0.382px;left:616.5px;">Copiers</div>
<div style="position:absolute;top:552.8px;font-size:12px;line-height:16px;color:#605e5c;white-space:pre;font-weight:bold;letter-spacing:0.051px;left:616.5px;">55.62K</div>
<div style="position:absolute;left:611.2px;top:587.1px;width:130.5px;height:10.4px;background:#eeeeee;"></div>
<div style="position:absolute;left:611.2px;top:587.1px;width:104.5px;height:10.4px;background:#e044a7;"></div>
<div style="position:absolute;top:599.4px;font-size:12px;line-height:16px;color:#252423;white-space:pre;font-weight:bold;letter-spacing:-0.390px;left:616.5px;">Phones</div>
<div style="position:absolute;top:612.5px;font-size:12px;line-height:16px;color:#605e5c;white-space:pre;font-weight:bold;letter-spacing:0.051px;left:616.5px;">44.52K</div>
<div style="position:absolute;left:611.2px;top:646.8px;width:130.5px;height:10.4px;background:#eeeeee;"></div>
<div style="position:absolute;left:611.2px;top:646.8px;width:98.5px;height:10.4px;background:#e044a7;"></div>
<div style="position:absolute;top:659.1px;font-size:12px;line-height:16px;color:#252423;white-space:pre;font-weight:bold;letter-spacing:-0.610px;left:616.5px;">Accessories</div>
<div style="position:absolute;top:672.2px;font-size:12px;line-height:16px;color:#605e5c;white-space:pre;font-weight:bold;letter-spacing:0.051px;left:616.5px;">41.94K</div>
<div style="position:absolute;left:611.2px;top:706.4px;width:130.5px;height:10.4px;background:#eeeeee;"></div>
<div style="position:absolute;left:611.2px;top:706.4px;width:8.5px;height:10.4px;background:#e044a7;"></div>
<div style="position:absolute;top:718.7px;font-size:12px;line-height:16px;color:#252423;white-space:pre;font-weight:bold;letter-spacing:-0.211px;left:616.5px;">Machines</div>
<div style="position:absolute;top:731.8px;font-size:12px;line-height:16px;color:#605e5c;white-space:pre;font-weight:bold;letter-spacing:-0.004px;left:616.5px;">3.38K</div>
<div style="position:absolute;left:791.2px;top:527.4px;width:130.5px;height:10.4px;background:#eeeeee;"></div>
<div style="position:absolute;left:791.2px;top:527.4px;width:130.5px;height:10.4px;background:#e044a7;"></div>
<div style="position:absolute;top:539.7px;font-size:12px;line-height:16px;color:#252423;white-space:pre;font-weight:bold;letter-spacing:-0.129px;left:796.5px;">United States</div>
<div style="position:absolute;top:552.8px;font-size:12px;line-height:16px;color:#605e5c;white-space:pre;font-weight:bold;letter-spacing:0.051px;left:796.5px;">55.62K</div>
<div style="position:absolute;left:971.2px;top:527.4px;width:130.5px;height:10.4px;background:#eeeeee;"></div>
<div style="position:absolute;left:971.2px;top:527.4px;width:130.5px;height:10.4px;background:#e044a7;"></div>
<div style="position:absolute;top:539.7px;font-size:12px;line-height:16px;color:#252423;white-space:pre;font-weight:bold;letter-spacing:-0.021px;left:976.5px;">Washington</div>
<div style="position:absolute;top:552.8px;font-size:12px;line-height:16px;color:#605e5c;white-space:pre;font-weight:bold;letter-spacing:-0.004px;left:976.5px;">9.44K</div>
<div style="position:absolute;left:971.2px;top:587.1px;width:130.5px;height:10.4px;background:#eeeeee;"></div>
<div style="position:absolute;left:971.2px;top:587.1px;width:122.5px;height:10.4px;background:#e044a7;"></div>
<div style="position:absolute;top:599.4px;font-size:12px;line-height:16px;color:#252423;white-space:pre;font-weight:bold;letter-spacing:-0.001px;left:976.5px;">Indiana</div>
<div style="position:absolute;top:612.5px;font-size:12px;line-height:16px;color:#605e5c;white-space:pre;font-weight:bold;letter-spacing:-0.004px;left:976.5px;">8.85K</div>
<div style="position:absolute;left:971.2px;top:646.8px;width:130.5px;height:10.4px;background:#eeeeee;"></div>
<div style="position:absolute;left:971.2px;top:646.8px;width:109.5px;height:10.4px;background:#e044a7;"></div>
<div style="position:absolute;top:659.1px;font-size:12px;line-height:16px;color:#252423;white-space:pre;font-weight:bold;letter-spacing:-0.034px;left:976.5px;">California</div>
<div style="position:absolute;top:672.2px;font-size:12px;line-height:16px;color:#605e5c;white-space:pre;font-weight:bold;letter-spacing:-0.004px;left:976.5px;">7.89K</div>
<div style="position:absolute;left:971.2px;top:706.4px;width:130.5px;height:10.4px;background:#eeeeee;"></div>
<div style="position:absolute;left:971.2px;top:706.4px;width:81.5px;height:10.4px;background:#e044a7;"></div>
<div style="position:absolute;top:718.7px;font-size:12px;line-height:16px;color:#252423;white-space:pre;font-weight:bold;letter-spacing:0.053px;left:976.5px;">New York</div>
<div style="position:absolute;top:731.8px;font-size:12px;line-height:16px;color:#605e5c;white-space:pre;font-weight:bold;letter-spacing:-0.004px;left:976.5px;">5.84K</div>
<div style="position:absolute;left:971.2px;top:766.1px;width:130.5px;height:10.4px;background:#eeeeee;"></div>
<div style="position:absolute;left:971.2px;top:766.1px;width:70.5px;height:10.4px;background:#e044a7;"></div>
<div style="position:absolute;top:778.4px;font-size:12px;line-height:16px;color:#252423;white-space:pre;font-weight:bold;letter-spacing:-0.087px;left:976.5px;">Delaware</div>
<div style="position:absolute;top:791.5px;font-size:12px;line-height:16px;color:#605e5c;white-space:pre;font-weight:bold;letter-spacing:-0.004px;left:976.5px;">5.04K</div>
<div style="position:absolute;left:971.2px;top:825.8px;width:130.5px;height:10.4px;background:#eeeeee;"></div>
<div style="position:absolute;left:971.2px;top:825.8px;width:48.5px;height:10.4px;background:#e044a7;"></div>
<div style="position:absolute;top:838.1px;font-size:12px;line-height:16px;color:#252423;white-space:pre;font-weight:bold;letter-spacing:-0.195px;left:976.5px;">Rhode Island</div>
<div style="position:absolute;top:851.2px;font-size:12px;line-height:16px;color:#605e5c;white-space:pre;font-weight:bold;letter-spacing:-0.004px;left:976.5px;">3.49K</div>
<svg style="position:absolute;left:1025px;top:882px;" width="17" height="11" viewBox="0 0 17 11"><path d="M1.500 1.500l7 7 7-7" fill="none" stroke="#a0a0a0" stroke-width="1.500"/></svg>
<div style="position:absolute;left:0px;top:200px;width:50px;height:800px;background:#f3f2f1;"></div>
<div style="position:absolute;left:50px;top:200px;width:1px;height:800px;background:#e1dfdd;"></div>
<div style="position:absolute;left:0px;top:200px;width:3px;height:50px;background:#117865;"></div>
<svg style="position:absolute;left:15px;top:215px;" width="22" height="20" viewBox="0 0 22 20"><path d="M2 1V17.500H20" fill="none" stroke="#252423" stroke-width="1.400"/><rect x="4.800" y="6" width="3.200" height="9.500" fill="none" stroke="#252423" stroke-width="1.200"/><rect x="10" y="8.500" width="3.200" height="7" fill="none" stroke="#252423" stroke-width="1.200"/><rect x="15.200" y="3.500" width="3.200" height="12" fill="none" stroke="#252423" stroke-width="1.200"/></svg>
<svg style="position:absolute;left:14px;top:263px;" width="23" height="21" viewBox="0 0 23 21"><rect x="1.600" y="1.600" width="19.800" height="17.800" fill="none" stroke="#7a7876" stroke-width="1.400"/><path d="M1.600 3.200h19.800" stroke="#7a7876" stroke-width="2.200"/><path d="M1.600 8.500h19.800M1.600 14h19.800M8.200 3v16.500M14.800 3v16.500" stroke="#7a7876" stroke-width="1.200"/></svg>
<svg style="position:absolute;left:13px;top:312px;" width="25" height="25" viewBox="0 0 25 25"><rect x="13.500" y="1.500" width="9.500" height="8.500" fill="none" stroke="#7a7876" stroke-width="1.300"/><path d="M13.500 4.500h9.500" stroke="#7a7876" stroke-width="1.200"/><rect x="1.500" y="6.500" width="9" height="8.500" fill="none" stroke="#7a7876" stroke-width="1.300"/><path d="M1.500 10h9" stroke="#7a7876" stroke-width="1.200"/><rect x="13.500" y="14" width="9.500" height="9" fill="none" stroke="#7a7876" stroke-width="1.300"/><path d="M13.500 17.500h9.500" stroke="#7a7876" stroke-width="1.200"/><path d="M10.500 8.500h3M6 15v4h7.500" fill="none" stroke="#7a7876" stroke-width="1.200"/></svg>
<svg style="position:absolute;left:11px;top:363px;" width="26" height="24" viewBox="0 0 26 24"><path d="M7 12V2h8l5 5v9c0 3-2 4.500-4.500 4.500" fill="none" stroke="#7a7876" stroke-width="1.300"/><path d="M15 2v5h5" fill="none" stroke="#7a7876" stroke-width="1.200"/><path d="M22.500 9v7c0 3-1.500 5-4 5.500" fill="none" stroke="#7a7876" stroke-width="1.200"/></svg>
<div style="position:absolute;top:375.0px;font-size:8.5px;line-height:11px;color:#7a7876;white-space:pre;font-weight:bold;letter-spacing:-0.316px;left:12.5px;background:#f3f2f1;">DAX</div>
<svg style="position:absolute;left:11px;top:413px;" width="28" height="24" viewBox="0 0 28 24"><path d="M8 14V2h8l5 5v7" fill="none" stroke="#7a7876" stroke-width="1.300"/><path d="M16 2v5h5" fill="none" stroke="#7a7876" stroke-width="1.200"/></svg>
<div style="position:absolute;top:425.0px;font-size:8.5px;line-height:11px;color:#7a7876;white-space:pre;font-weight:bold;letter-spacing:-0.151px;left:14.0px;">TMDL</div>
<div style="position:absolute;left:1427px;top:200px;width:1px;height:755px;background:#8a8886;"></div>
<div style="position:absolute;left:1428px;top:200px;width:40px;height:755px;background:#fff;"></div>
<svg style="position:absolute;left:1439px;top:216px;" width="18" height="16" viewBox="0 0 18 16"><path d="M8 1.500L2 8l6 6.500M15.500 1.500L9.500 8l6 6.500" fill="none" stroke="#252423" stroke-width="1.500"/></svg>
<svg style="position:absolute;left:1443px;top:250px;" width="18" height="18" viewBox="0 0 18 18"><path d="M14.500 1.800v13.400L7.500 10.300H2.200V6.700H7.500Z" fill="none" stroke="#252423" stroke-width="1.500" stroke-linejoin="miter"/></svg>
<div style="position:absolute;left:1438px;top:277px;width:20px;height:54px;"><div style="position:absolute;left:20px;top:0;transform-origin:0 0;transform:rotate(90deg);font-size:17px;line-height:20px;-webkit-text-stroke:0.45px #252423;color:#252423;letter-spacing:0.9px;white-space:pre;">Filters</div></div>
<div style="position:absolute;left:1468px;top:200px;width:227px;height:800px;background:#f3f2f1;border-left:1px solid #e1dfdd;"></div>
<div style="position:absolute;top:212.0px;font-size:20px;line-height:26px;color:#252423;white-space:pre;-webkit-text-stroke:0.55px #252423;letter-spacing:0.077px;left:1479.5px;">Visualizations</div>
<svg style="position:absolute;left:1667px;top:216px;" width="18" height="16" viewBox="0 0 18 16"><path d="M2.500 1.500L8.500 8l-6 6.500M10 1.500L16 8l-6 6.500" fill="none" stroke="#252423" stroke-width="1.500"/></svg>
<div style="position:absolute;top:248.5px;font-size:14px;line-height:18px;color:#252423;white-space:pre;-webkit-text-stroke:0.45px #252423;letter-spacing:0.515px;left:1479.5px;">Build visual</div>
<div style="position:absolute;left:1479px;top:272px;width:40px;height:40px;background:#d2d0ce;border-radius:4px;"></div>
<svg style="position:absolute;left:1479px;top:272px;" width="40" height="40" viewBox="0 0 40 40"><path d="M5.500 6h23" stroke="#252423" stroke-width="1.200"/><rect x="5.500" y="11.500" width="29" height="10" fill="#117865" stroke="#252423" stroke-width="1" stroke-dasharray="2 1.500"/><rect x="5.500" y="24.500" width="29" height="10.500" fill="#117865" stroke="#252423" stroke-width="1" stroke-dasharray="2 1.500"/></svg>
<svg style="position:absolute;left:1563px;top:272px;" width="40" height="40" viewBox="0 0 40 40"><path d="M11 29.500H5V5.500h11l6 6v4" fill="none" stroke="#252423" stroke-width="1.300"/><path d="M16 5.500v6h6" fill="none" stroke="#252423" stroke-width="1.200"/><path d="M33 16.500L22.500 27c.8 3-3 6.500-11 6 4-2 3-6.500 7.500-8L30.500 14.500c2-1.500 4 .5 2.500 2z" fill="#f3f2f1" stroke="#252423" stroke-width="1.200" stroke-linejoin="round"/></svg>
<svg style="position:absolute;left:1468px;top:316px;" width="227" height="14" viewBox="0 0 227 14"><path d="M1 11.500H20.500L31 2l10.500 9.500H227" fill="none" stroke="#8a8886" stroke-width="1"/></svg>
<svg style="position:absolute;left:1482.5px;top:342px;" width="23" height="23" viewBox="0 0 23 23"><path d="M0.800 0V22H23" fill="none" stroke="#3b3a39" stroke-width="1.600"/><rect x="1.5" y="3.5" width="5.5" height="4.5" fill="#fdfdfd" stroke="#3b3a39" stroke-width="1.1"/><rect x="7" y="2.6" width="8.5" height="5.4" fill="#7fb8ec" stroke="#1b74c9" stroke-width="1.3"/><rect x="1.5" y="14" width="8" height="4.5" fill="#fdfdfd" stroke="#3b3a39" stroke-width="1.1"/><rect x="9.5" y="13.1" width="11" height="5.4" fill="#c1bfbd" stroke="#8a8886" stroke-width="1.1"/></svg>
<svg style="position:absolute;left:1517.5px;top:342px;" width="23" height="23" viewBox="0 0 23 23"><path d="M0.800 0V22H23" fill="none" stroke="#3b3a39" stroke-width="1.600"/><rect x="5" y="15" width="5.5" height="7" fill="#fdfdfd" stroke="#3b3a39" stroke-width="1.1"/><rect x="5" y="6.5" width="5.5" height="8.5" fill="#7fb8ec" stroke="#1b74c9" stroke-width="1.3"/><rect x="15" y="14" width="5.5" height="8" fill="#fdfdfd" stroke="#3b3a39" stroke-width="1.1"/><rect x="15" y="3" width="5.5" height="11" fill="#c1bfbd" stroke="#8a8886" stroke-width="1.1"/></svg>
<svg style="position:absolute;left:1552.5px;top:342px;" width="23" height="23" viewBox="0 0 23 23"><path d="M0.800 0V22H23" fill="none" stroke="#3b3a39" stroke-width="1.600"/><rect x="1.5" y="1.5" width="20.5" height="4" fill="#7fb8ec" stroke="#1b74c9" stroke-width="1.3"/><rect x="1.5" y="7" width="11" height="3.5" fill="#fdfdfd" stroke="#3b3a39" stroke-width="1.1"/><rect x="1.5" y="11.5" width="8.5" height="4" fill="#c1bfbd" stroke="#8a8886" stroke-width="1.1"/><rect x="1.5" y="16.5" width="15" height="4" fill="#fdfdfd" stroke="#3b3a39" stroke-width="1.1"/></svg>
<svg style="position:absolute;left:1587.5px;top:342px;" width="23" height="23" viewBox="0 0 23 23"><path d="M0.800 0V22H23" fill="none" stroke="#3b3a39" stroke-width="1.600"/><rect x="2.5" y="1.5" width="4" height="20.5" fill="#7fb8ec" stroke="#1b74c9" stroke-width="1.3"/><rect x="7.5" y="9" width="4" height="13" fill="#fdfdfd" stroke="#3b3a39" stroke-width="1.1"/><rect x="12" y="13" width="4" height="9" fill="#c1bfbd" stroke="#8a8886" stroke-width="1.1"/><rect x="17" y="6.5" width="4.5" height="15.5" fill="#fdfdfd" stroke="#3b3a39" stroke-width="1.1"/></svg>
<svg style="position:absolute;left:1622.5px;top:342px;" width="23" height="23" viewBox="0 0 23 23"><path d="M0.800 0V22H23" fill="none" stroke="#3b3a39" stroke-width="1.600"/><rect x="1.5" y="3.5" width="4" height="4.5" fill="#fdfdfd" stroke="#3b3a39" stroke-width="1.1"/><rect x="5.5" y="2.6" width="14.5" height="5.4" fill="#7fb8ec" stroke="#1b74c9" stroke-width="1.3"/><rect x="1.5" y="14" width="11.5" height="4.5" fill="#fdfdfd" stroke="#3b3a39" stroke-width="1.1"/><rect x="13" y="13.1" width="6.5" height="5.4" fill="#c1bfbd" stroke="#8a8886" stroke-width="1.1"/></svg>
<svg style="position:absolute;left:1657.5px;top:342px;" width="23" height="23" viewBox="0 0 23 23"><path d="M0.800 0V22H23" fill="none" stroke="#3b3a39" stroke-width="1.600"/><rect x="4.5" y="17" width="5.5" height="5" fill="#fdfdfd" stroke="#3b3a39" stroke-width="1.1"/><rect x="4.5" y="2.5" width="5.5" height="14.5" fill="#7fb8ec" stroke="#1b74c9" stroke-width="1.3"/><rect x="15" y="10" width="5.5" height="12" fill="#fdfdfd" stroke="#3b3a39" stroke-width="1.1"/><rect x="15" y="2.5" width="5.5" height="7.5" fill="#c1bfbd" stroke="#8a8886" stroke-width="1.1"/></svg>
<svg style="position:absolute;left:1482.5px;top:377px;" width="23" height="23" viewBox="0 0 23 23"><path d="M0.800 0V22H23" fill="none" stroke="#3b3a39" stroke-width="1.600"/><path d="M1.500 19L15 5L22.500 13" fill="none" stroke="#1b74c9" stroke-width="1.5" stroke-linejoin="miter"/><path d="M1.500 13.500L8.500 7L14 13.500L22 5.500" fill="none" stroke="#3b3a39" stroke-width="1.4" stroke-linejoin="miter"/></svg>
<svg style="position:absolute;left:1517.5px;top:377px;" width="23" height="23" viewBox="0 0 23 23"><path d="M13.500 10L17.500 0.800L22.500 11.500V22.500Z" fill="#c1bfbd" stroke="#8a8886" stroke-width="1" stroke-linejoin="miter"/><path d="M0.500 14L8 2.500L13.500 10.500L6.500 20Z" fill="#fdfdfd" stroke="#3b3a39" stroke-width="1.3" stroke-linejoin="miter"/><path d="M0.500 14.500L6.500 20L13.500 10.500L22.500 22.500H0.500Z" fill="#7fb8ec" stroke="#1b74c9" stroke-width="1.3" stroke-linejoin="miter"/></svg>
<svg style="position:absolute;left:1552.5px;top:377px;" width="23" height="23" viewBox="0 0 23 23"><path d="M0.800 0V22H23" fill="none" stroke="#3b3a39" stroke-width="1.600"/><path d="M1.500 5L8.500 11.500L15.500 3.500L19 7L22.500 6.500V17L15.500 11.500L8.500 18.500L1.500 12.500Z" fill="#7fb8ec" stroke="#1b74c9" stroke-width="1.3" stroke-linejoin="miter"/></svg>
<svg style="position:absolute;left:1587.5px;top:377px;" width="23" height="23" viewBox="0 0 23 23"><path d="M0.800 0V22H23" fill="none" stroke="#3b3a39" stroke-width="1.600"/><path d="M1.500 3H22.500V17.500L15.500 11.500L8.500 18.500L1.500 12.500Z" fill="#7fb8ec" stroke="#1b74c9" stroke-width="1.3" stroke-linejoin="miter"/></svg>
<svg style="position:absolute;left:1622.5px;top:377px;" width="23" height="23" viewBox="0 0 23 23"><path d="M0.800 0V22H23" fill="none" stroke="#3b3a39" stroke-width="1.600"/><rect x="4.5" y="15" width="5.5" height="7" fill="#fdfdfd" stroke="#3b3a39" stroke-width="1.1"/><rect x="4.5" y="3" width="5.5" height="15" fill="#7fb8ec" stroke="#1b74c9" stroke-width="1.3"/><rect x="14.5" y="10" width="5.5" height="12" fill="#fdfdfd" stroke="#3b3a39" stroke-width="1.1"/><rect x="14.5" y="3.5" width="5.5" height="6.5" fill="#c1bfbd" stroke="#8a8886" stroke-width="1.1"/><path d="M1 21L8.500 12L14 17.500L22 9.500" fill="none" stroke="#3b3a39" stroke-width="1.5" stroke-linejoin="miter"/></svg>
<svg style="position:absolute;left:1657.5px;top:377px;" width="23" height="23" viewBox="0 0 23 23"><path d="M0.800 0V22H23" fill="none" stroke="#3b3a39" stroke-width="1.600"/><rect x="4" y="10.5" width="5.5" height="11.5" fill="#7fb8ec" stroke="#1b74c9" stroke-width="1.3"/><rect x="9.5" y="1.5" width="5.5" height="20.5" fill="#fdfdfd" stroke="#3b3a39" stroke-width="1.1"/><rect x="15" y="7" width="5.5" height="15" fill="#c1bfbd" stroke="#8a8886" stroke-width="1.1"/><path d="M1 21L8 12.500L13.500 18L22.500 9.500" fill="none" stroke="#3b3a39" stroke-width="1.5" stroke-linejoin="miter"/></svg>
<svg style="position:absolute;left:1482.5px;top:412px;" width="23" height="23" viewBox="0 0 23 23"><path d="M0.800 0V22H23" fill="none" stroke="#3b3a39" stroke-width="1.600"/><path d="M3 4C7 4 8.500 9 12.500 9S18 3.500 22.500 2.500V7.500C18 8.500 16.500 13 12.500 13S7 9 3 9Z" fill="#b0aeac" stroke="#8a8886" stroke-width="0.800"/><path d="M3 14.500H9C10 17 15 17 16 14.500H22.500V19.500H3Z" fill="#e8a33a" stroke="#c97a10" stroke-width="0.800"/><path d="M3 10C7 10 8.500 16.500 12.500 16.500S18 9 22.500 8V12C18 13 16.500 20 12.500 20S7 14 3 14Z" fill="#7fb8ec" stroke="#1b74c9" stroke-width="1.200"/><path d="M3 12C7 12 8.500 18.300 12.500 18.300S18 11 22.500 10" fill="none" stroke="#1b74c9" stroke-width="1"/></svg>
<svg style="position:absolute;left:1517.5px;top:412px;" width="23" height="23" viewBox="0 0 23 23"><path d="M0.800 0V22H23" fill="none" stroke="#3b3a39" stroke-width="1.600"/><rect x="3" y="7" width="4" height="15" fill="#fdfdfd" stroke="#3b3a39" stroke-width="1.1"/><rect x="8" y="7" width="5" height="7" fill="#c1bfbd" stroke="#8a8886" stroke-width="1.1"/><rect x="13" y="1.5" width="3.5" height="11" fill="#1b74c9" stroke="#1b74c9" stroke-width="1"/><rect x="17" y="1.5" width="4.5" height="20.5" fill="#fdfdfd" stroke="#3b3a39" stroke-width="1.1"/></svg>
<svg style="position:absolute;left:1552.5px;top:412px;" width="23" height="23" viewBox="0 0 23 23"><rect x="0.7" y="1.5" width="22" height="7" fill="#7fb8ec" stroke="#1b74c9" stroke-width="1.3"/><rect x="3.5" y="8.8" width="16.5" height="6.7" fill="#7fb8ec" stroke="#1b74c9" stroke-width="1.3"/><rect x="7" y="15.8" width="9.5" height="6.5" fill="#7fb8ec" stroke="#1b74c9" stroke-width="1.3"/></svg>
<svg style="position:absolute;left:1587.5px;top:412px;" width="23" height="23" viewBox="0 0 23 23"><path d="M0.800 0V22H23" fill="none" stroke="#3b3a39" stroke-width="1.600"/><rect x="16.5" y="1.5" width="4" height="4" fill="#3b3a39" stroke="#3b3a39" stroke-width="0.5"/><rect x="4" y="15" width="3.8" height="3.8" fill="#3b3a39" stroke="#3b3a39" stroke-width="0.5"/><rect x="4.5" y="5" width="3.3" height="3.3" fill="#7fb8ec" stroke="#5aa2e0" stroke-width="0.6"/><rect x="10.5" y="9" width="3.3" height="3.3" fill="#7fb8ec" stroke="#5aa2e0" stroke-width="0.6"/><rect x="17" y="14" width="3.3" height="3.3" fill="#7fb8ec" stroke="#5aa2e0" stroke-width="0.6"/></svg>
<svg style="position:absolute;left:1622.5px;top:412px;" width="23" height="23" viewBox="0 0 23 23"><circle cx="11.500" cy="11.500" r="10.700" fill="#fdfdfd" stroke="#3b3a39" stroke-width="1.400"/><path d="M11.500 11.500V0.800A10.700 10.700 0 0 1 19.100 19.100Z" fill="#7fb8ec" stroke="#1b74c9" stroke-width="1.300"/></svg>
<svg style="position:absolute;left:1657.5px;top:412px;" width="23" height="23" viewBox="0 0 23 23"><circle cx="11.500" cy="11.500" r="8" fill="none" stroke="#7fb8ec" stroke-width="5.500"/><path d="M11.500 3.500A8 8 0 0 0 3.500 11.500" fill="none" stroke="#fdfdfd" stroke-width="5.500"/><circle cx="11.500" cy="11.500" r="10.800" fill="none" stroke="#1b74c9" stroke-width="1.100"/><circle cx="11.500" cy="11.500" r="5.200" fill="none" stroke="#1b74c9" stroke-width="1.100"/><path d="M11.500 0.700v5.500M0.700 11.500H6.200" stroke="#1b74c9" stroke-width="1.100"/><path d="M11.500 0.700A10.800 10.800 0 0 0 0.700 11.500" fill="none" stroke="#9cc6ee" stroke-width="1.100"/></svg>
<svg style="position:absolute;left:1482.5px;top:447px;" width="23" height="23" viewBox="0 0 23 23"><rect x="0.6" y="0.6" width="8.5" height="22" fill="#7fb8ec" stroke="#1b74c9" stroke-width="1.3"/><path d="M0.600 11.500h8.500" stroke="#1b74c9" stroke-width="1.300"/><rect x="9.1" y="0.6" width="13.4" height="6.5" fill="#fdfdfd" stroke="#3b3a39" stroke-width="1.1"/><rect x="9.1" y="7.1" width="5.5" height="15.5" fill="#fdfdfd" stroke="#3b3a39" stroke-width="1.1"/><rect x="14.6" y="7.1" width="7.9" height="7.5" fill="#fdfdfd" stroke="#3b3a39" stroke-width="1.1"/><rect x="14.6" y="14.6" width="7.9" height="8" fill="#fdfdfd" stroke="#3b3a39" stroke-width="1.1"/></svg>
<svg style="position:absolute;left:1517.5px;top:447px;" width="23" height="23" viewBox="0 0 23 23"><circle cx="11" cy="10" r="7.300" fill="#fff" stroke="#3b3a39" stroke-width="1.300"/><path d="M8 4.500c2-1.500 5-1.500 6 0 .5 1.500-1.500 2-2.500 3.500s-2.500 1-3 0-1.500-2-.500-3.500zM10 11.500c1.500-.5 3.500 0 4 1.500s-1 3.500-2.500 3.500-2-2.500-1.500-5zM15 7c1-.5 2.500 1 2.500 3" fill="#2e9a47" stroke="#1e7a34" stroke-width="0.600"/><path d="M7 1.500A10 10 0 0 0 11 20" fill="none" stroke="#3b3a39" stroke-width="1.400"/><path d="M11 20v2M4 22.300h14.500" stroke="#3b3a39" stroke-width="1.400"/></svg>
<svg style="position:absolute;left:1552.5px;top:447px;" width="23" height="23" viewBox="0 0 23 23"><path d="M1 3.500L3.500 1.500L8.500 2.500L10 4L14 4L18 1.500H22.500V10L21 16L17.500 18.500L15 17.500L11 20.500L6 18.500L3 14.500L1.500 10Z" fill="#c1bfbd" stroke="#8a8886" stroke-width="1"/><path d="M1 3.500L3.500 1.500L8.500 2.500L10 4L10.500 12L6.500 12.500L4 9.500L1.500 10Z" fill="#7fb8ec" stroke="#1b74c9" stroke-width="1.100"/><path d="M13.500 12L22.300 10.500L21 16L17.500 18.500L15 17.500L11.500 20L12 15.500Z" fill="#7fb8ec" stroke="#1b74c9" stroke-width="1.100"/><path d="M10.500 12L13.500 12L22 10.500" fill="none" stroke="#fff" stroke-width="1"/></svg>
<svg style="position:absolute;left:1587.5px;top:447px;" width="23" height="23" viewBox="0 0 23 23"><path d="M13.500 -0.500L19.500 24L13 15.500L0.500 20.500Z" fill="#3a96dd"/><path d="M13.500 -0.500L13 15.500L19.500 24Z" fill="#2b80c8"/></svg>
<svg style="position:absolute;left:1622.5px;top:447px;" width="23" height="23" viewBox="0 0 23 23"><path d="M1 16.500A10.500 10.500 0 0 1 7 6.800L9.500 11.500A5.500 5.500 0 0 0 6 16.500Z" fill="#fff" stroke="#3b3a39" stroke-width="1.300"/><path d="M7 6.800A10.500 10.500 0 0 1 22.500 16.500H17.500A5.500 5.500 0 0 0 9.500 11.500Z" fill="#7fb8ec" stroke="#1b74c9" stroke-width="1.300"/><path d="M11 15.500l4.500-4" stroke="#3b3a39" stroke-width="1.600"/><circle cx="11.500" cy="15.500" r="1.300" fill="#3b3a39"/></svg>
<svg style="position:absolute;left:1657.5px;top:447px;" width="23" height="23" viewBox="0 0 23 23"><rect x="0.7" y="2.8" width="21.8" height="17.2" fill="#fdfdfd" stroke="#3b3a39" stroke-width="1.4"/><text x="3.200" y="14.300" font-family="Liberation Sans,sans-serif" font-size="10.500" fill="#2f8ad8" textLength="17" lengthAdjust="spacingAndGlyphs">123</text><path d="M3 17h17" stroke="#8a8886" stroke-width="1"/></svg>
<svg style="position:absolute;left:1482.5px;top:482px;" width="23" height="23" viewBox="0 0 23 23"><rect x="0.7" y="0.7" width="21.8" height="21.8" fill="#fdfdfd" stroke="#3b3a39" stroke-width="1.4"/><path d="M5 4v15" stroke="#8a8886" stroke-width="1"/><path d="M7 6h11.500M7 12.500h11.500" stroke="#1b74c9" stroke-width="1.600"/><path d="M7 9h5.500M7 15.500h5.500" stroke="#8a8886" stroke-width="1.200"/></svg>
<svg style="position:absolute;left:1517.5px;top:482px;" width="23" height="23" viewBox="0 0 23 23"><rect x="0.7" y="1.7" width="21.8" height="18.3" fill="#fdfdfd" stroke="#3b3a39" stroke-width="1.4"/><path d="M3.500 12.500L7.500 5.500L11.500 12.500Z" fill="#5cb85c" stroke="#2e9a47" stroke-width="0.800"/><path d="M12.500 5.500H20L16.300 12Z" fill="#e05a5a" stroke="#c9302c" stroke-width="0.800"/><path d="M3.500 16h16" stroke="#8a8886" stroke-width="1"/></svg>
<svg style="position:absolute;left:1552.5px;top:482px;" width="23" height="23" viewBox="0 0 23 23"><path d="M12 22.300H0.700V0.700H22.300V10" fill="#fdfdfd" stroke="#3b3a39" stroke-width="1.400"/><rect x="1.400" y="1.400" width="20.200" height="3" fill="#c1bfbd"/><path d="M0.700 4.800H22.300" stroke="#3b3a39" stroke-width="1"/><rect x="5" y="8.500" width="3.500" height="3.500" fill="#c1bfbd" stroke="#8a8886" stroke-width="0.800"/><rect x="5" y="14.500" width="3.500" height="3.500" fill="#c1bfbd" stroke="#8a8886" stroke-width="0.800"/><path d="M11.500 11.500H23.500L19.300 16.500V23H15.700V16.500Z" fill="#fff" stroke="#3b3a39" stroke-width="1.400" stroke-linejoin="miter"/></svg>
<svg style="position:absolute;left:1587.5px;top:482px;" width="23" height="23" viewBox="0 0 23 23"><rect x="0.7" y="0.7" width="21.8" height="21.8" fill="#fdfdfd" stroke="#3b3a39" stroke-width="1.4"/><rect x="1.400" y="1.400" width="20.400" height="3.300" fill="#c1bfbd"/><path d="M0.700 5h21.800M0.700 10.700h21.800M0.700 16.400h21.800" stroke="#8a8886" stroke-width="1"/><path d="M8 5v17.500M15 5v17.500" stroke="#8a8886" stroke-width="1"/><rect x="0.7" y="0.7" width="21.8" height="21.8" fill="none" stroke="#3b3a39" stroke-width="1.4"/></svg>
<svg style="position:absolute;left:1622.5px;top:482px;" width="23" height="23" viewBox="0 0 23 23"><rect x="0.7" y="0.7" width="21.8" height="21.8" fill="#fdfdfd" stroke="#3b3a39" stroke-width="1.4"/><rect x="1.400" y="1.400" width="20.400" height="3.300" fill="#c1bfbd"/><rect x="15" y="5" width="7.500" height="17.500" fill="#7fb8ec"/><rect x="0.700" y="16.400" width="21.800" height="6.100" fill="#7fb8ec"/><path d="M0.700 10.700H15M8 5v11.400" stroke="#8a8886" stroke-width="1"/><path d="M15 10.700h7.500M8 16.400v6M15 5v17.500M0.700 16.400h21.800" stroke="#fff" stroke-width="0.900"/><path d="M0.700 5h21.800" stroke="#8a8886" stroke-width="1"/><rect x="0.7" y="0.7" width="21.8" height="21.8" fill="none" stroke="#3b3a39" stroke-width="1.4"/></svg>
<svg style="position:absolute;left:1657.5px;top:482px;" width="23" height="23" viewBox="0 0 23 23"><text x="4.300" y="17" font-family="Liberation Sans,sans-serif" font-weight="bold" font-size="19" fill="#1f7bd0">R</text></svg>
<svg style="position:absolute;left:1482.5px;top:517px;" width="23" height="23" viewBox="0 0 23 23"><text x="-0.500" y="16" font-family="Liberation Sans,sans-serif" font-weight="bold" font-size="20" fill="#1f7bd0" textLength="23.500" lengthAdjust="spacingAndGlyphs">Py</text></svg>
<svg style="position:absolute;left:1517.5px;top:517px;" width="23" height="23" viewBox="0 0 23 23"><path d="M0.800 0.500V22.300H23" fill="none" stroke="#3b3a39" stroke-width="1.500"/><path d="M1 5h15.500" stroke="#1b74c9" stroke-width="1.300"/><circle cx="19" cy="5" r="2.700" fill="#7fb8ec" stroke="#1b74c9" stroke-width="1.200"/><path d="M1 11h11.500M1 16h7" stroke="#3b3a39" stroke-width="1.200"/><rect x="12.500" y="9.500" width="2.800" height="3" fill="#c1bfbd" stroke="#8a8886" stroke-width="0.800"/><rect x="7.500" y="14.500" width="2.800" height="3" fill="#c1bfbd" stroke="#8a8886" stroke-width="0.800"/></svg>
<svg style="position:absolute;left:1552.5px;top:517px;" width="23" height="23" viewBox="0 0 23 23"><path d="M7 11.200h4.500M15 3.500h-3.500v15.500H15M11.500 11.200H15" fill="none" stroke="#3b3a39" stroke-width="1.400"/><rect x="0.7" y="8.7" width="6.5" height="5" fill="#7fb8ec" stroke="#1b74c9" stroke-width="1.3"/><rect x="15" y="1" width="7.5" height="5" fill="#7fb8ec" stroke="#1b74c9" stroke-width="1.3"/><rect x="15" y="8.7" width="7.5" height="5" fill="#7fb8ec" stroke="#1b74c9" stroke-width="1.3"/><rect x="15" y="16.5" width="7.5" height="5" fill="#7fb8ec" stroke="#1b74c9" stroke-width="1.3"/></svg>
<svg style="position:absolute;left:1587.5px;top:517px;" width="23" height="23" viewBox="0 0 23 23"><path d="M0.800 1.700H22.300V16H9.500L4.500 21.500V16H0.800Z" fill="#fdfdfd" stroke="#1b74c9" stroke-width="1.500" stroke-linejoin="miter"/></svg>
<svg style="position:absolute;left:1622.5px;top:517px;" width="23" height="23" viewBox="0 0 23 23"><path d="M3 6.500V0.700H13.500L19.500 6.500V22.300H3V11.500" fill="#fdfdfd" stroke="#3b3a39" stroke-width="1.400"/><path d="M13.500 0.700V6.500H19.500" fill="none" stroke="#3b3a39" stroke-width="1.200"/><circle cx="3.200" cy="9" r="2.200" fill="#fdfdfd" stroke="#1b74c9" stroke-width="1.200"/><path d="M7.500 11h8M7.500 14.500h6" stroke="#1b74c9" stroke-width="1.300"/></svg>
<svg style="position:absolute;left:1657.5px;top:517px;" width="23" height="23" viewBox="0 0 23 23"><path d="M5 2H18V9.500C18 13.500 15 15.500 11.500 15.500S5 13.500 5 9.500Z" fill="#fdfdfd" stroke="#3b3a39" stroke-width="1.400"/><path d="M5 4H1.200C1.200 8.500 2.500 11 6 11.500M18 4h3.800C21.800 8.500 20.500 11 17 11.500" fill="none" stroke="#3b3a39" stroke-width="1.400"/><path d="M9.500 15.500L8.500 19.500H14.500L13.500 15.500" fill="#fdfdfd" stroke="#3b3a39" stroke-width="1.300"/><rect x="5.500" y="1.500" width="12" height="2.800" fill="#7fb8ec" stroke="#1b74c9" stroke-width="1"/><rect x="6" y="19.800" width="11" height="2.600" rx="1" fill="#7fb8ec" stroke="#1b74c9" stroke-width="1"/></svg>
<svg style="position:absolute;left:1482.5px;top:552px;" width="23" height="23" viewBox="0 0 23 23"><path d="M2.500 1H13.500L19.500 7.500V23.500H2.500Z" fill="#fdfdfd" stroke="#3b3a39" stroke-width="1.500"/><path d="M13.500 1V7.500H19.500" fill="none" stroke="#3b3a39" stroke-width="1.200"/><path d="M6.500 21v-7M11 21v-4M15.500 21V11.500" stroke="#252423" stroke-width="2.500"/></svg>
<svg style="position:absolute;left:1517.5px;top:552px;" width="23" height="23" viewBox="0 0 23 23"><rect x="1.5" y="4.5" width="21" height="16.5" fill="#fdfdfd" stroke="#3b3a39" stroke-width="1.4"/><text x="5.500" y="15.800" font-family="Liberation Sans,sans-serif" font-size="10" fill="#2f8ad8" textLength="15.500" lengthAdjust="spacingAndGlyphs">123</text><path d="M4 18.500h16" stroke="#8a8886" stroke-width="1"/><path d="M3.5 0.5h5.500l-3 5.500h3.500l-9 10.500 2.500-8h-3.500z" fill="#f2a93b" stroke="#c97a10" stroke-width="0.900" stroke-linejoin="round"/></svg>
<svg style="position:absolute;left:1552.5px;top:552px;" width="23" height="23" viewBox="0 0 23 23"><rect x="11.5" y="2" width="8.5" height="8.5" fill="#fdfdfd" stroke="#8a8886" stroke-width="1.1"/><rect x="2.5" y="11.5" width="8.5" height="8.5" fill="#fdfdfd" stroke="#8a8886" stroke-width="1.1"/><rect x="5" y="5" width="6" height="6" fill="#7fb8ec" stroke="#9fc9ee" stroke-width="0.8"/><path d="M11.500 12.500H23.500L19.300 17.500V23.500H15.700V17.500Z" fill="#fff" stroke="#3b3a39" stroke-width="1.400"/><path d="M3.5 0.5h5.500l-3 5.500h3.500l-9 10.500 2.500-8h-3.500z" fill="#f2a93b" stroke="#c97a10" stroke-width="0.900" stroke-linejoin="round"/></svg>
<svg style="position:absolute;left:1587.5px;top:552px;" width="23" height="23" viewBox="0 0 23 23"><path d="M8 2H22.500V12M13 22H1.500V11.500" fill="none" stroke="#1b74c9" stroke-width="1.500"/><path d="M22 4.500C17 5 17.500 9 15 10.500S11.500 14 12.500 16.500 14 20 12 21.500H8C10 19 8.500 17 8 14.500S10 9.500 13 8 16 3 19 2.500Z" fill="#7fb8ec" stroke="#1b74c9" stroke-width="1"/><path d="M0.500 4.500C0.500 0 7 0 7 4.500C7 7.500 3.800 11.500 3.800 11.500S0.500 7.500 0.500 4.500Z" fill="#c96a14"/><circle cx="3.800" cy="4.300" r="1.200" fill="#fff"/><circle cx="19.500" cy="19.500" r="3" fill="#c96a14"/><circle cx="22" cy="13.800" r="1.700" fill="#c96a14"/></svg>
<svg style="position:absolute;left:1622.5px;top:552px;" width="23" height="23" viewBox="0 0 23 23"><path d="M8.500 2.500L16 10L8.500 21.500L1 12Z" fill="none" stroke="#6b2fb8" stroke-width="1.300" stroke-linejoin="round"/><path d="M15 2.500L22.500 12L15 21.500L7.500 14Z" fill="none" stroke="#8a4fd8" stroke-width="1.300" stroke-linejoin="round"/><path d="M11.800 6.500L16 10L11.800 17.500L7.500 14Z" fill="none" stroke="#b88ae8" stroke-width="1"/></svg>
<svg style="position:absolute;left:1657.5px;top:552px;" width="23" height="23" viewBox="0 0 23 23"><path d="M1 2.500H14.500L22.500 12L14.500 21.500H1L9 12Z" fill="#fdfdfd" stroke="#1b74c9" stroke-width="1.400" stroke-linejoin="round"/><path d="M8.500 21.500L16.500 12L14 9M5 21.500L18.500 5.500" fill="none" stroke="#1b74c9" stroke-width="1.100"/></svg>
<svg style="position:absolute;left:1482px;top:627px;" width="24" height="24" viewBox="0 0 24 24"><circle cx="12" cy="12.300" r="9" fill="none" stroke="#3aaa3a" stroke-width="4.300"/><path d="M12 3.300A9 9 0 0 0 3.800 8.500" fill="none" stroke="#d4d4d4" stroke-width="4.300"/></svg>
<svg style="position:absolute;left:1518px;top:628px;" width="23" height="23" viewBox="0 0 23 23"><rect x="0" y="0" width="23" height="23" fill="#dbe9f5"/><rect x="0" y="0" width="9.500" height="23" fill="#7db5e8"/><path d="M21 7l-3 5 4 8" stroke="#555" stroke-width="1" fill="none"/><path d="M17 1.7999999999999998l2.7840000000000003 1.6v3.2l-2.7840000000000003 1.6l-2.7840000000000003 -1.6v-3.2z" fill="#fff"/><path d="M11 5.3l2.7840000000000003 1.6v3.2l-2.7840000000000003 1.6l-2.7840000000000003 -1.6v-3.2z" fill="#2fb0e0"/><path d="M17.5 8.3l2.7840000000000003 1.6v3.2l-2.7840000000000003 1.6l-2.7840000000000003 -1.6v-3.2z" fill="#3a8fd8"/><path d="M11 11.8l2.7840000000000003 1.6v3.2l-2.7840000000000003 1.6l-2.7840000000000003 -1.6v-3.2z" fill="#fff"/><path d="M5 15.3l2.7840000000000003 1.6v3.2l-2.7840000000000003 1.6l-2.7840000000000003 -1.6v-3.2z" fill="#2a7fd0"/><path d="M6.500 2c-2 3-2 6 0 8" stroke="#1b74c9" stroke-width="1.300" fill="none"/><path d="M8 22l3-4" stroke="#1b74c9" stroke-width="1.500"/></svg>
<div style="position:absolute;top:581.0px;font-size:17px;line-height:22px;color:#252423;white-space:pre;letter-spacing:0.943px;left:1484.5px;letter-spacing:3.2px;">...</div>
<div style="position:absolute;left:1478px;top:618px;width:208px;height:1px;border-top:1px dashed #d0cecc;"></div>
<div style="position:absolute;left:1469px;top:662px;width:226px;height:1px;background:#e1dfdd;"></div>
<div style="position:absolute;top:673.5px;font-size:15px;line-height:20px;color:#252423;white-space:pre;letter-spacing:-0.459px;left:1484.0px;">Values</div>
<div style="position:absolute;left:1474px;top:700px;width:213px;height:35px;background:#fff;border:1px dashed #c8c6c4;border-radius:3px;"></div>
<div style="position:absolute;top:708.0px;font-size:15px;line-height:20px;color:#252423;white-space:pre;letter-spacing:-0.021px;left:1487.5px;">Add data fields here</div>
<div style="position:absolute;top:748.5px;font-size:15px;line-height:20px;color:#252423;white-space:pre;-webkit-text-stroke:0.4px #252423;letter-spacing:0.472px;left:1484.0px;">Drill through</div>
<div style="position:absolute;top:779.5px;font-size:15px;line-height:20px;color:#252423;white-space:pre;letter-spacing:-0.029px;left:1484.0px;">Cross-report</div>
<div style="position:absolute;left:1627px;top:781px;width:40px;height:19px;border:1px solid #605e5c;border-radius:10px;background:#fff;"></div>
<div style="position:absolute;left:1632.5px;top:785.5px;width:10px;height:10px;background:#605e5c;border-radius:5px;"></div>
<div style="position:absolute;top:783.5px;font-size:11px;line-height:14px;color:#605e5c;white-space:pre;letter-spacing:0.177px;left:1645.0px;">Off</div>
<div style="position:absolute;top:813.5px;font-size:15px;line-height:20px;color:#252423;white-space:pre;letter-spacing:-0.138px;left:1484.0px;">Keep all filters</div>
<div style="position:absolute;left:1627px;top:815px;width:40px;height:19px;border-radius:10px;background:#117865;"></div>
<div style="position:absolute;left:1651px;top:819.5px;width:10px;height:10px;background:#fff;border-radius:5px;"></div>
<div style="position:absolute;top:817.5px;font-size:11px;line-height:14px;color:#fff;white-space:pre;letter-spacing:-0.337px;left:1633.0px;">On</div>
<div style="position:absolute;left:1474px;top:848px;width:213px;height:31px;background:#fff;border:1px dashed #c8c6c4;border-radius:3px;"></div>
<div style="position:absolute;top:854.0px;font-size:15px;line-height:20px;color:#252423;white-space:pre;letter-spacing:0.157px;left:1485.0px;">Add drill-through fields here</div>
<div style="position:absolute;left:1694px;top:200px;width:226px;height:800px;background:#f3f2f1;border-left:1px solid #e1dfdd;"></div>
<div style="position:absolute;top:212.0px;font-size:20px;line-height:26px;color:#252423;white-space:pre;-webkit-text-stroke:0.55px #252423;letter-spacing:-0.312px;left:1705.5px;">Data</div>
<svg style="position:absolute;left:1893px;top:216px;" width="18" height="16" viewBox="0 0 18 16"><path d="M2.500 1.500L8.500 8l-6 6.500M10 1.500L16 8l-6 6.500" fill="none" stroke="#252423" stroke-width="1.500"/></svg>
<div style="position:absolute;left:1700px;top:257px;width:215px;height:30px;background:#fff;border:1px solid #d1d1d1;border-bottom:1px solid #605e5c;border-radius:5px;"></div>
<svg style="position:absolute;left:1714px;top:263px;" width="22" height="20" viewBox="0 0 22 20"><circle cx="8.800" cy="8.400" r="6.200" fill="none" stroke="#424242" stroke-width="1.300"/><path d="M13.300 12.900L19 18.600" stroke="#424242" stroke-width="1.300"/></svg>
<div style="position:absolute;top:263.0px;font-size:17px;line-height:22px;color:#707070;white-space:pre;letter-spacing:-0.477px;left:1742.5px;">Search</div>
<div style="position:absolute;left:1905px;top:297px;width:10px;height:442px;background:#8a8a8a;"></div>
<svg style="position:absolute;left:1712px;top:309px;" width="15" height="9" viewBox="0 0 15 9"><path d="M1 1l6.500 6.500L14 1" fill="none" stroke="#323130" stroke-width="1.200"/></svg>
<svg style="position:absolute;left:1730px;top:304px;" width="19" height="20" viewBox="0 0 19 20"><path d="M5 17.800h8.500a3 3 0 0 0 3-3V4" fill="none" stroke="#252423" stroke-width="1.200"/><rect x="1.200" y="1" width="12.800" height="15" rx="2.500" fill="none" stroke="#252423" stroke-width="1.400"/><rect x="4" y="3.800" width="7.200" height="2.800" fill="none" stroke="#252423" stroke-width="1.100"/><path d="M4.200 10h2M8.500 10h2M4.200 13h2M8.500 13h2" stroke="#252423" stroke-width="1.800"/></svg>
<div style="position:absolute;top:303.5px;font-size:15px;line-height:20px;color:#323130;white-space:pre;letter-spacing:-1.597px;left:1754.5px;">MESURES</div>
<svg style="position:absolute;left:1712px;top:489px;" width="15" height="9" viewBox="0 0 15 9"><path d="M1 1l6.500 6.500L14 1" fill="none" stroke="#323130" stroke-width="1.200"/></svg>
<svg style="position:absolute;left:1731px;top:485px;" width="17" height="17" viewBox="0 0 17 17"><rect x="1.200" y="1.200" width="14.600" height="14.600" rx="3" fill="none" stroke="#252423" stroke-width="1.400"/><path d="M1.500 6h14M1.500 11h14M6 1.500v14M11 1.500v14" stroke="#252423" stroke-width="1.200"/></svg>
<div style="position:absolute;top:483.5px;font-size:15px;line-height:20px;color:#323130;white-space:pre;letter-spacing:-0.307px;left:1754.5px;">Orders</div>
<div style="position:absolute;left:1750px;top:336px;width:15px;height:15px;border:1px solid #7a7876;border-radius:3px;background:#f5f4f3;"></div>
<svg style="position:absolute;left:1775px;top:334px;" width="16" height="18" viewBox="0 0 16 18"><rect x="1.200" y="1" width="13.600" height="16" rx="2.500" fill="none" stroke="#252423" stroke-width="1.400"/><rect x="4" y="3.800" width="8" height="3" fill="none" stroke="#252423" stroke-width="1.100"/><path d="M4 10h1.800M7.100 10h1.800M10.200 10h1.800M4 13.200h1.800M7.100 13.200h1.800M10.200 13.200h1.800" stroke="#252423" stroke-width="1.800"/></svg>
<div style="position:absolute;top:333.5px;font-size:15px;line-height:20px;color:#252423;white-space:pre;letter-spacing:0.166px;left:1797.5px;">Arrow</div>
<div style="position:absolute;left:1750px;top:366px;width:15px;height:15px;border:1px solid #7a7876;border-radius:3px;background:#f5f4f3;"></div>
<svg style="position:absolute;left:1775px;top:364px;" width="16" height="18" viewBox="0 0 16 18"><rect x="1.200" y="1" width="13.600" height="16" rx="2.500" fill="none" stroke="#252423" stroke-width="1.400"/><rect x="4" y="3.800" width="8" height="3" fill="none" stroke="#252423" stroke-width="1.100"/><path d="M4 10h1.800M7.100 10h1.800M10.200 10h1.800M4 13.200h1.800M7.100 13.200h1.800M10.200 13.200h1.800" stroke="#252423" stroke-width="1.800"/></svg>
<div style="position:absolute;top:363.5px;font-size:15px;line-height:20px;color:#252423;white-space:pre;letter-spacing:0.074px;left:1797.5px;">Arrow Color</div>
<div style="position:absolute;left:1750px;top:396px;width:15px;height:15px;border:1px solid #7a7876;border-radius:3px;background:#f5f4f3;"></div>
<svg style="position:absolute;left:1775px;top:394px;" width="16" height="18" viewBox="0 0 16 18"><rect x="1.200" y="1" width="13.600" height="16" rx="2.500" fill="none" stroke="#252423" stroke-width="1.400"/><rect x="4" y="3.800" width="8" height="3" fill="none" stroke="#252423" stroke-width="1.100"/><path d="M4 10h1.800M7.100 10h1.800M10.200 10h1.800M4 13.200h1.800M7.100 13.200h1.800M10.200 13.200h1.800" stroke="#252423" stroke-width="1.800"/></svg>
<div style="position:absolute;top:393.5px;font-size:15px;line-height:20px;color:#252423;white-space:pre;letter-spacing:-1.066px;left:1797.5px;">PREVIOUS YE...</div>
<div style="position:absolute;left:1750px;top:426px;width:15px;height:15px;border:1px solid #7a7876;border-radius:3px;background:#f5f4f3;"></div>
<svg style="position:absolute;left:1775px;top:424px;" width="16" height="18" viewBox="0 0 16 18"><rect x="1.200" y="1" width="13.600" height="16" rx="2.500" fill="none" stroke="#252423" stroke-width="1.400"/><rect x="4" y="3.800" width="8" height="3" fill="none" stroke="#252423" stroke-width="1.100"/><path d="M4 10h1.800M7.100 10h1.800M10.200 10h1.800M4 13.200h1.800M7.100 13.200h1.800M10.200 13.200h1.800" stroke="#252423" stroke-width="1.800"/></svg>
<div style="position:absolute;top:423.5px;font-size:15px;line-height:20px;color:#252423;white-space:pre;letter-spacing:-0.430px;left:1797.5px;">Sum of Sales ...</div>
<div style="position:absolute;left:1750px;top:456px;width:15px;height:15px;border:1px solid #7a7876;border-radius:3px;background:#f5f4f3;"></div>
<svg style="position:absolute;left:1775px;top:454px;" width="16" height="18" viewBox="0 0 16 18"><rect x="1.200" y="1" width="13.600" height="16" rx="2.500" fill="none" stroke="#252423" stroke-width="1.400"/><rect x="4" y="3.800" width="8" height="3" fill="none" stroke="#252423" stroke-width="1.100"/><path d="M4 10h1.800M7.100 10h1.800M10.200 10h1.800M4 13.200h1.800M7.100 13.200h1.800M10.200 13.200h1.800" stroke="#252423" stroke-width="1.800"/></svg>
<div style="position:absolute;top:453.5px;font-size:15px;line-height:20px;color:#252423;white-space:pre;letter-spacing:-1.504px;left:1797.5px;">YOY%</div>
<div style="position:absolute;left:1750px;top:516px;width:15px;height:15px;border:1px solid #7a7876;border-radius:3px;background:#f5f4f3;"></div>
<div style="position:absolute;top:513.5px;font-size:15px;line-height:20px;color:#252423;white-space:pre;letter-spacing:-0.108px;left:1797.5px;">Category</div>
<div style="position:absolute;left:1750px;top:546px;width:15px;height:15px;border:1px solid #7a7876;border-radius:3px;background:#f5f4f3;"></div>
<div style="position:absolute;top:543.5px;font-size:15px;line-height:20px;color:#252423;white-space:pre;letter-spacing:0.042px;left:1797.5px;">City</div>
<div style="position:absolute;left:1750px;top:576px;width:15px;height:15px;border:1px solid #7a7876;border-radius:3px;background:#f5f4f3;"></div>
<div style="position:absolute;top:573.5px;font-size:15px;line-height:20px;color:#252423;white-space:pre;letter-spacing:0.068px;left:1797.5px;">Country</div>
<div style="position:absolute;left:1750px;top:606px;width:15px;height:15px;border:1px solid #7a7876;border-radius:3px;background:#f5f4f3;"></div>
<div style="position:absolute;top:603.5px;font-size:15px;line-height:20px;color:#252423;white-space:pre;letter-spacing:-0.199px;left:1797.5px;">Customer ID</div>
<div style="position:absolute;left:1750px;top:636px;width:15px;height:15px;border:1px solid #7a7876;border-radius:3px;background:#f5f4f3;"></div>
<div style="position:absolute;top:633.5px;font-size:15px;line-height:20px;color:#252423;white-space:pre;letter-spacing:-0.204px;left:1797.5px;">Customer Na...</div>
<div style="position:absolute;left:1750px;top:666px;width:15px;height:15px;border:1px solid #7a7876;border-radius:3px;background:#f5f4f3;"></div>
<svg style="position:absolute;left:1775px;top:663px;" width="16" height="19" viewBox="0 0 16 19"><path d="M13.500 4V1.800H2.500L8.800 9.500 2.500 17.200H13.500V15" fill="none" stroke="#252423" stroke-width="1.500" stroke-linejoin="miter"/></svg>
<div style="position:absolute;top:663.5px;font-size:15px;line-height:20px;color:#252423;white-space:pre;letter-spacing:0.080px;left:1797.5px;">Discount</div>
<div style="position:absolute;left:1750px;top:696px;width:15px;height:15px;border:1px solid #7a7876;border-radius:3px;background:#f5f4f3;"></div>
<svg style="position:absolute;left:1775px;top:694px;" width="16" height="18" viewBox="0 0 16 18"><rect x="1.200" y="1.500" width="13.600" height="15" rx="2.500" fill="none" stroke="#252423" stroke-width="1.400"/><path d="M1.500 6h13" stroke="#252423" stroke-width="1.300"/><path d="M4.200 9.500h1.600M7.200 9.500h1.600M10.200 9.500h1.600M4.200 12.800h1.600M7.200 12.800h1.600" stroke="#252423" stroke-width="1.700"/></svg>
<div style="position:absolute;top:693.5px;font-size:15px;line-height:20px;color:#252423;white-space:pre;letter-spacing:-0.019px;left:1797.5px;">Order Date</div>
<div style="position:absolute;left:1750px;top:726px;width:15px;height:15px;border:1px solid #7a7876;border-radius:3px;background:#f5f4f3;"></div>
<div style="position:absolute;top:723.5px;font-size:15px;line-height:20px;color:#252423;white-space:pre;letter-spacing:-0.064px;left:1797.5px;">Order ID</div>
<div style="position:absolute;left:1750px;top:756px;width:15px;height:15px;border:1px solid #7a7876;border-radius:3px;background:#f5f4f3;"></div>
<svg style="position:absolute;left:1775px;top:753px;" width="16" height="19" viewBox="0 0 16 19"><path d="M13.500 4V1.800H2.500L8.800 9.500 2.500 17.200H13.500V15" fill="none" stroke="#252423" stroke-width="1.500" stroke-linejoin="miter"/></svg>
<div style="position:absolute;top:753.5px;font-size:15px;line-height:20px;color:#252423;white-space:pre;letter-spacing:-0.338px;left:1797.5px;">Postal Code</div>
<div style="position:absolute;left:1750px;top:786px;width:15px;height:15px;border:1px solid #7a7876;border-radius:3px;background:#f5f4f3;"></div>
<div style="position:absolute;top:783.5px;font-size:15px;line-height:20px;color:#252423;white-space:pre;letter-spacing:-0.086px;left:1797.5px;">Product ID</div>
<div style="position:absolute;left:1750px;top:816px;width:15px;height:15px;border:1px solid #7a7876;border-radius:3px;background:#f5f4f3;"></div>
<div style="position:absolute;top:813.5px;font-size:15px;line-height:20px;color:#252423;white-space:pre;letter-spacing:0.011px;left:1797.5px;">Product Name</div>
<div style="position:absolute;left:1750px;top:846px;width:15px;height:15px;border:1px solid #7a7876;border-radius:3px;background:#f5f4f3;"></div>
<svg style="position:absolute;left:1775px;top:843px;" width="16" height="19" viewBox="0 0 16 19"><path d="M13.500 4V1.800H2.500L8.800 9.500 2.500 17.200H13.500V15" fill="none" stroke="#252423" stroke-width="1.500" stroke-linejoin="miter"/></svg>
<div style="position:absolute;top:843.5px;font-size:15px;line-height:20px;color:#252423;white-space:pre;letter-spacing:0.165px;left:1797.5px;">Profit</div>
<div style="position:absolute;left:1750px;top:876px;width:15px;height:15px;border:1px solid #7a7876;border-radius:3px;background:#f5f4f3;"></div>
<svg style="position:absolute;left:1775px;top:873px;" width="16" height="19" viewBox="0 0 16 19"><path d="M13.500 4V1.800H2.500L8.800 9.500 2.500 17.200H13.500V15" fill="none" stroke="#252423" stroke-width="1.500" stroke-linejoin="miter"/></svg>
<div style="position:absolute;top:873.5px;font-size:15px;line-height:20px;color:#252423;white-space:pre;letter-spacing:0.142px;left:1797.5px;">Quantity</div>
<div style="position:absolute;left:1750px;top:906px;width:15px;height:15px;border:1px solid #7a7876;border-radius:3px;background:#f5f4f3;"></div>
<div style="position:absolute;top:903.5px;font-size:15px;line-height:20px;color:#252423;white-space:pre;letter-spacing:-0.256px;left:1797.5px;">Region</div>
<div style="position:absolute;left:1750px;top:936px;width:15px;height:15px;border:1px solid #7a7876;border-radius:3px;background:#f5f4f3;"></div>
<svg style="position:absolute;left:1775px;top:934px;" width="16" height="18" viewBox="0 0 16 18"><rect x="1.200" y="1" width="13.600" height="16" rx="2.500" fill="none" stroke="#252423" stroke-width="1.400"/><rect x="4" y="3.800" width="8" height="3" fill="none" stroke="#252423" stroke-width="1.100"/><path d="M4 10h1.800M7.100 10h1.800M10.200 10h1.800M4 13.200h1.800M7.100 13.200h1.800M10.200 13.200h1.800" stroke="#252423" stroke-width="1.800"/></svg>
<div style="position:absolute;top:933.5px;font-size:15px;line-height:20px;color:#252423;white-space:pre;letter-spacing:-0.221px;left:1797.5px;">Returned %</div>
<div style="position:absolute;left:1750px;top:966px;width:15px;height:15px;border:1px solid #7a7876;border-radius:3px;background:#f5f4f3;"></div>
<svg style="position:absolute;left:1775px;top:963px;" width="16" height="19" viewBox="0 0 16 19"><path d="M13.500 4V1.800H2.500L8.800 9.500 2.500 17.200H13.500V15" fill="none" stroke="#252423" stroke-width="1.500" stroke-linejoin="miter"/></svg>
<div style="position:absolute;top:963.5px;font-size:15px;line-height:20px;color:#252423;white-space:pre;letter-spacing:-0.362px;left:1797.5px;">Row ID</div>
<svg style="position:absolute;left:1733px;top:696px;" width="9" height="15" viewBox="0 0 9 15"><path d="M1 1l6.500 6.500L1 14" fill="none" stroke="#323130" stroke-width="1.200"/></svg>
<div style="position:absolute;left:0px;top:956px;width:1468px;height:44px;background:#f3f2f1;"></div>
<div style="position:absolute;left:50px;top:956px;width:1px;height:44px;background:#e1dfdd;"></div>
<div style="position:absolute;left:211px;top:956px;width:564px;height:44px;background:#fff;"></div>
<div style="position:absolute;left:210px;top:956px;width:1px;height:44px;background:#8a8886;"></div>
<div style="position:absolute;left:337px;top:956px;width:1px;height:44px;background:#d2d0ce;"></div>
<div style="position:absolute;left:564px;top:956px;width:1px;height:44px;background:#d2d0ce;"></div>
<svg style="position:absolute;left:64px;top:963px;" width="28" height="22" viewBox="0 0 28 22"><rect x="2.500" y="2.500" width="22.500" height="13.500" rx="1" fill="none" stroke="#323130" stroke-width="1.500"/><path d="M13.800 16v3.200M9.500 19.500h8.500" stroke="#323130" stroke-width="1.400"/></svg>
<div style="position:absolute;left:64px;top:991px;width:30px;height:3px;background:#117865;border-radius:1.500px;"></div>
<svg style="position:absolute;left:124px;top:961px;" width="20" height="27" viewBox="0 0 20 27"><rect x="2" y="1.500" width="15" height="24" rx="2" fill="none" stroke="#323130" stroke-width="1.500"/><path d="M8 21.500h3" stroke="#323130" stroke-width="1.400"/></svg>
<svg style="position:absolute;left:167px;top:972px;" width="8" height="11" viewBox="0 0 8 11"><path d="M7 0.500L1 5.500L7 10.500Z" fill="#c8c6c4"/></svg>
<svg style="position:absolute;left:195px;top:972px;" width="8" height="11" viewBox="0 0 8 11"><path d="M1 0.500L7 5.500L1 10.500Z" fill="#c8c6c4"/></svg>
<div style="position:absolute;top:968.5px;font-size:15px;line-height:20px;color:#252423;white-space:pre;letter-spacing:-1.001px;left:236.0px;">OVER VIEW</div>
<div style="position:absolute;top:968.5px;font-size:15px;line-height:20px;color:#252423;white-space:pre;letter-spacing:-0.888px;left:363.0px;">PROFIT &amp; SALES INSIGHTS</div>
<div style="position:absolute;top:968.5px;font-size:15px;line-height:20px;color:#252423;white-space:pre;-webkit-text-stroke:0.4px #252423;letter-spacing:-0.859px;left:590.0px;">DECOMPESATION TREE</div>
<div style="position:absolute;left:565px;top:995px;width:210px;height:5px;background:#117865;"></div>
<div style="position:absolute;left:775px;top:956px;width:49px;height:44px;background:#147a67;"></div>
<div style="position:absolute;left:792px;top:975.5px;width:15px;height:3.2px;background:#fff;"></div>
<div style="position:absolute;left:797.9px;top:969.6px;width:3.2px;height:15px;background:#fff;"></div>
<div style="position:absolute;left:0px;top:1000px;width:1920px;height:30px;background:#f3f2f1;border-top:1px solid #e1dfdd;"></div>
<div style="position:absolute;top:1007.5px;font-size:14px;line-height:18px;color:#323130;white-space:pre;letter-spacing:0.217px;left:5.0px;">Page 3 of 3</div>
<div style="position:absolute;top:1004.0px;font-size:16px;line-height:21px;color:#323130;white-space:pre;left:1655.0px;">-</div>
<div style="position:absolute;left:1667px;top:1015px;width:125px;height:1px;background:#605e5c;"></div>
<div style="position:absolute;left:1713px;top:1009px;width:5px;height:12px;background:#484644;"></div>
<div style="position:absolute;left:1729px;top:1011px;width:1px;height:8px;background:#605e5c;"></div>
<div style="position:absolute;top:1003.5px;font-size:18px;line-height:23px;color:#323130;white-space:pre;left:1797.0px;">+</div>
<div style="position:absolute;top:1006.5px;font-size:14px;line-height:18px;color:#605e5c;white-space:pre;letter-spacing:-0.007px;left:1825.0px;">80%</div>
<svg style="position:absolute;left:1876px;top:1007px;" width="24" height="18" viewBox="0 0 24 18"><path d="M2 6V3a1 1 0 0 1 1-1h4M16 2h4a1 1 0 0 1 1 1v3M21 11v3a1 1 0 0 1-1 1h-4M7 15H3a1 1 0 0 1-1-1v-3" fill="none" stroke="#323130" stroke-width="1.600"/></svg>
<div style="position:absolute;left:0px;top:1029px;width:1920px;height:51px;background:linear-gradient(90deg,#16222a 0,#1e2b32 60px,#3a3a3a 420px,#3b3a3a 1100px,#2a2f32 1300px,#1e272c 1500px,#1a2227 1920px);"></div>
<div style="position:absolute;left:0px;top:1029px;width:1920px;height:1px;background:#0e0e0e;"></div>
<div style="position:absolute;left:60px;top:1030px;width:359px;height:50px;background:#2e2e2e;border:1px solid #4d4d4d;border-bottom:none;"></div>
<svg style="position:absolute;left:20px;top:1045px;" width="21" height="21" viewBox="0 0 21 21"><path d="M0 2.800L8.500 1.600V9.800H0Z M9.800 1.400L20.500 0V9.800H9.800Z M0 11H8.500V19.200L0 18Z M9.800 11H20.500V20.800L9.800 19.400Z" fill="#fff"/></svg>
<svg style="position:absolute;left:73px;top:1044px;" width="24" height="24" viewBox="0 0 24 24"><circle cx="15.500" cy="8.500" r="6" fill="none" stroke="#e8e8e8" stroke-width="1.500"/><path d="M11.300 12.800L3 21" stroke="#e8e8e8" stroke-width="1.500"/></svg>
<div style="position:absolute;top:1044.0px;font-size:18px;line-height:23px;color:#e8e8e8;white-space:pre;letter-spacing:0.206px;left:110.5px;">Type here to search</div>
<svg style="position:absolute;left:0px;top:0px;" width="1920" height="1080" viewBox="0 0 1920 1080"><path d="M360.5 1039.7Q364.415 1050.285 375.0 1054.2Q364.415 1058.115 360.5 1068.7Q356.585 1058.115 346.0 1054.2Q356.585 1050.285 360.5 1039.7Z" fill="#f5bd2c"/><path d="M388.6 1052.3Q390.49 1057.4099999999999 395.6 1059.3Q390.49 1061.19 388.6 1066.3Q386.71000000000004 1061.19 381.6 1059.3Q386.71000000000004 1057.4099999999999 388.6 1052.3Z" fill="#f5bd2c"/><g transform="rotate(20 336 1065)"><path d="M336 1059.5Q337.485 1063.515 341.5 1065Q337.485 1066.485 336 1070.5Q334.515 1066.485 330.5 1065Q334.515 1063.515 336 1059.5Z" fill="#2ba3e8"/></g><circle cx="380.800" cy="1042.700" r="2.500" fill="#e84a2e"/><circle cx="403.600" cy="1066.800" r="2.500" fill="#6cc04a"/></svg>
<svg style="position:absolute;left:0px;top:0px;" width="1920" height="1080" viewBox="0 0 1920 1080"><path d="M440.500 1045V1047.800H452.800V1045M440.500 1064V1061.200H452.800V1064" fill="none" stroke="#fff" stroke-width="1.400"/><rect x="440.500" y="1050.600" width="12.300" height="7.600" fill="none" stroke="#fff" stroke-width="1.400"/><path d="M458.400 1045V1064" stroke="#fff" stroke-width="1.200"/><rect x="457" y="1051" width="2.900" height="3.400" fill="#fff"/></svg>
<div style="position:absolute;left:732px;top:1030px;width:61px;height:50px;background:#5a5958;"></div>
<div style="position:absolute;left:489px;top:1077px;width:40px;height:3px;background:#76b9ed;"></div>
<div style="position:absolute;left:529px;top:1077px;width:11px;height:3px;background:#5a8fbd;"></div>
<div style="position:absolute;left:732px;top:1077px;width:61px;height:3px;background:#76b9ed;"></div>
<div style="position:absolute;left:1045px;top:1077px;width:52px;height:3px;background:#76b9ed;"></div>
<svg style="position:absolute;left:0px;top:1000px;" width="1920" height="80" viewBox="0 1000 1920 80"><path d="M500 1046.500a1.500 1.500 0 0 1 1.500-1.500h8.500l2 2.500h14a1.500 1.500 0 0 1 1.500 1.500v15a1.500 1.500 0 0 1-1.500 1.500h-24.500a1.500 1.500 0 0 1-1.500-1.500z" fill="#f7c65e"/><path d="M500 1046.500a1.500 1.500 0 0 1 1.500-1.500h8.500l2 2.500h-12z" fill="#e3a02e"/><path d="M504.500 1065.500v-9.500a1.500 1.500 0 0 1 1.500-1.500h15.500a1.500 1.500 0 0 1 1.500 1.500v9.500h-4v-5.500h-10.500v5.500z" fill="#3a8ede"/><rect x="508.500" y="1060" width="10.500" height="2.500" fill="#f9d887"/><path d="M567 1049l11.500-7 12.500 7.500v17a1.500 1.500 0 0 1-1.500 1.500h-21a1.500 1.500 0 0 1-1.500-1.500z" fill="#1490df"/><path d="M578.500 1042l12.500 7.500-12.500 7z" fill="#0f5fb5"/><path d="M567 1056l24-6.500v17.500a1.500 1.500 0 0 1-1.500 1.500h-21a1.500 1.500 0 0 1-1.500-1.500z" fill="#28a8ea"/><path d="M573 1068l18-11v9.500a1.500 1.500 0 0 1-1.500 1.500z" fill="#50d0f0"/><rect x="561" y="1048" width="15.500" height="14.500" rx="1.200" fill="#0f6cbd"/><ellipse cx="568.700" cy="1055.300" rx="4" ry="4.500" fill="none" stroke="#fff" stroke-width="2"/><defs><linearGradient id="edg" x1="0" y1="0" x2="1" y2="0.300"><stop offset="0" stop-color="#1b7fd6"/><stop offset="0.550" stop-color="#2bb5c8"/><stop offset="1" stop-color="#5cc84a"/></linearGradient></defs><path d="M623.500 1056C623.500 1047 630 1040 638.500 1040S653 1046.500 653 1053C653 1058 649.500 1060.500 645.500 1060.500C642 1060.500 640 1058.500 641.500 1056C638 1054.500 634.500 1058 636 1062C637.500 1066 642.500 1067.500 648 1065.500C645 1069 640.500 1070.500 636 1069.500C629 1068.500 623.500 1063 623.500 1056Z" fill="url(#edg)"/><path d="M636 1062C637.500 1066 642.500 1067.500 648 1065.500C645 1069 640.500 1070.500 636 1069.500C631 1068.500 630 1060 636 1062Z" fill="#1557b0"/><path d="M625 1050C629 1043.500 640 1043 644 1049C640 1046.500 632 1047.500 630.500 1055Z" fill="#1467c2" opacity="0.700"/><rect x="623" y="1061" width="14.500" height="9" rx="1" fill="#b5651d"/><rect x="623" y="1061" width="14.500" height="3.800" fill="#d18a3a"/><path d="M627.500 1061v-1.500h5.500v1.500" fill="none" stroke="#8a4a12" stroke-width="1.100"/><rect x="629.500" y="1064" width="1.600" height="1.600" fill="#f7d86a"/><defs><radialGradient id="ffx" cx="0.650" cy="0.200" r="0.900"><stop offset="0" stop-color="#ffe14a"/><stop offset="0.450" stop-color="#ff9a2a"/><stop offset="0.800" stop-color="#f23a4a"/><stop offset="1" stop-color="#e0285a"/></radialGradient></defs><path d="M690 1046C691 1044 692.500 1042.500 692.500 1042.500C692.500 1045 694 1046.500 696 1047C698 1043.500 702 1041.500 703 1040C703.500 1043 706 1044 708.500 1046.500C712 1050 714 1054 713 1059C711.500 1065 706 1069 699.500 1069C692 1069 686 1063.500 686 1056C686 1052 687.500 1048.500 690 1046Z" fill="url(#ffx)"/><circle cx="699.500" cy="1054.500" r="6" fill="#7b3fd0"/><path d="M694 1052C697 1049 702.500 1049.500 704.500 1052.500C702 1051.500 699 1052 698 1054C697 1056 699 1058.500 702.500 1058C700 1060.500 695 1060 693.500 1056.500C693 1055 693.200 1053.200 694 1052Z" fill="#ff9a2a"/><path d="M686.500 1058C688 1065 694 1069 699.500 1069C705 1069 710 1066 712 1061C708 1065 701 1066 696 1063C692 1061 690 1058 689.500 1054Z" fill="#f03a3a"/><rect x="762.500" y="1040" width="10.500" height="30" rx="1" fill="#d99a1c"/><rect x="756" y="1047" width="11" height="23" rx="1" fill="#efb92e"/><rect x="749.700" y="1055" width="10.500" height="15" rx="1" fill="#f7cd5e"/><circle cx="824.200" cy="1054.700" r="14.500" fill="#1ed760"/><path d="M816 1049.500c6-1.800 12.500-1.300 17.500 1.500" fill="none" stroke="#15291c" stroke-width="2.400" stroke-linecap="round"/><path d="M817 1054.500c5-1.400 10.500-1 14.500 1.300" fill="none" stroke="#15291c" stroke-width="2" stroke-linecap="round"/><path d="M818 1059c4-1 8-.8 11.500 1" fill="none" stroke="#15291c" stroke-width="1.700" stroke-linecap="round"/><path d="M873.500 1069.500l2.300-7.500a13.300 13.300 0 1 1 5 4.800z" fill="none" stroke="#25d366" stroke-width="2.400" stroke-linejoin="round"/><path d="M881 1047.500c1-1 2-.8 2.500 0l1.500 3c.3.800 0 1.500-.8 2.200-.5.500-.5 1 0 1.800 1 1.800 2.500 3.200 4.300 4.200.8.400 1.300.3 1.800-.3.700-.8 1.400-1 2.200-.6l3 1.500c.8.500 1 1.500 0 2.500-1.500 1.800-4 2-6.500 1-4-1.500-7.500-5-9-9-.8-2.500-.5-4.800 1-6.300z" fill="#25d366"/><circle cx="947.5" cy="1054.7" r="13.500" fill="#2ba0dc"/><path d="M939.5 1054.7L955.0 1048.2L952.0 1062.2L947.0 1058.2L945.0 1060.7L944.5 1056.7Z" fill="#fff"/><path d="M944.5 1056.7L952.5 1050.7L947.0 1058.2L945.0 1060.7Z" fill="#c8e3f5"/><circle cx="1071.7" cy="1054.7" r="13.500" fill="#2ba0dc"/><path d="M1063.7 1054.7L1079.2 1048.2L1076.2 1062.2L1071.2 1058.2L1069.2 1060.7L1068.7 1056.7Z" fill="#fff"/><path d="M1068.7 1056.7L1076.7 1050.7L1071.2 1058.2L1069.2 1060.7Z" fill="#c8e3f5"/><rect x="1070.500" y="1059.500" width="18.500" height="11.500" rx="3" fill="#e8403c"/><rect x="995" y="1040" width="30" height="30" fill="#0e7a3c"/><rect x="997.500" y="1051.500" width="25" height="6.500" fill="#e9f4ec"/><path d="M1000 1053.500h20M1000 1056h20" stroke="#7ab892" stroke-width="0.800"/><path d="M1001 1062h18" stroke="#bfe0cc" stroke-width="1.200"/><path d="M1003 1042c1 5 10 6 13 0" fill="none" stroke="#8cc9a4" stroke-width="1.300"/><circle cx="1448" cy="1056" r="9" fill="#f5b62a"/><circle cx="1444" cy="1052" r="8.500" fill="#1c252a"/><path d="M1430 1050a4.500 4.500 0 0 1 4-6.500a6 6 0 0 1 11 1a4 4 0 0 1 0 8h-12a3.500 3.500 0 0 1-3-2.500z" fill="#c9dff5"/><path d="M1440 1066.500a3.800 3.800 0 0 1 2-7a5.500 5.500 0 0 1 10.500 1a3.500 3.500 0 0 1 0 6.500z" fill="#b8d4f0"/><circle cx="1450" cy="1045.500" r="6.300" fill="#d8342e"/></svg>
<div style="position:absolute;top:1059.0px;font-size:10px;line-height:13px;color:#fff;white-space:pre;letter-spacing:0.033px;left:1073.5px;">.58</div>
<div style="position:absolute;top:1039.5px;font-size:9px;line-height:12px;color:#fff;white-space:pre;font-weight:bold;left:1447.5px;">٤</div>
<svg style="position:absolute;left:0px;top:0px;" width="1920" height="1080" viewBox="0 0 1920 1080"><g opacity="0.300" fill="none" stroke="#969696" stroke-width="10.500" stroke-linecap="round" stroke-linejoin="round"><path d="M1037 1006H884.500"/><circle cx="1053" cy="998.500" r="16"/><path d="M964 1006V990 M984 1006V990 M1001.500 1006V985 M1018 1006V983"/><circle cx="922" cy="990.500" r="14.500"/><path d="M884.500 1006V958"/><path d="M868 980.500C852 984 846 1002 855 1010C862 1015 874 1012 884.500 1006"/></g><g opacity="0.300" fill="#969696"><circle cx="954" cy="973" r="7.500"/><circle cx="970" cy="973" r="7.500"/><circle cx="914" cy="959" r="7.500"/><circle cx="929.500" cy="959" r="7.500"/></g></svg>
<div style="position:absolute;top:1014.5px;font-size:38px;line-height:49px;color:rgba(160,160,160,0.420);white-space:pre;font-weight:bold;letter-spacing:-0.490px;left:845.0px;">mostaql.com</div>
<div style="position:absolute;top:1044.5px;font-size:17px;line-height:22px;color:#fff;white-space:pre;letter-spacing:0.004px;left:1468.0px;">26°C</div>
<div style="position:absolute;top:1045.0px;font-size:16px;line-height:21px;color:#fff;white-space:pre;left:1516.0px;width:70px;text-align:right;direction:rtl;">غائم جزئيًا</div>
<svg style="position:absolute;left:1614px;top:1048px;" width="20" height="12" viewBox="0 0 20 12"><path d="M1.500 10.500L10 2l8.500 8.500" fill="none" stroke="#fff" stroke-width="1.500"/></svg>
<svg style="position:absolute;left:1644px;top:1046px;" width="24" height="18" viewBox="0 0 24 18"><rect x="1.500" y="3.500" width="15" height="9" fill="none" stroke="#fff" stroke-width="1.300"/><rect x="3" y="5" width="5" height="6" fill="#fff"/><rect x="17" y="6" width="1.800" height="4" fill="#fff"/><circle cx="14.500" cy="12.500" r="4.300" fill="#16a34a"/><path d="M14.500 10v5M12.800 12.500h3.400" stroke="#fff" stroke-width="0.900"/></svg>
<svg style="position:absolute;left:1675px;top:1045px;" width="22" height="20" viewBox="0 0 22 20"><path d="M2 17A14.500 14.500 0 0 1 17 2.500" fill="none" stroke="#fff" stroke-width="1.400"/><path d="M6.500 17A10 10 0 0 1 17 7" fill="none" stroke="#fff" stroke-width="1.400"/><path d="M11 17A5.500 5.500 0 0 1 17 11.500" fill="none" stroke="#fff" stroke-width="1.400"/><circle cx="16" cy="16.500" r="1.500" fill="#fff"/></svg>
<svg style="position:absolute;left:1702px;top:1044px;" width="26" height="22" viewBox="0 0 26 22"><path d="M1.500 8h3.500l5-4.500v15l-5-4.500H1.500z" fill="none" stroke="#fff" stroke-width="1.200"/><path d="M13 8.500a3.500 3.500 0 0 1 0 5" fill="none" stroke="#fff" stroke-width="1.100"/><path d="M16 6a7 7 0 0 1 0 10" fill="none" stroke="#9aa0a4" stroke-width="1.100"/><path d="M19.500 3.500a10.500 10.500 0 0 1 0 15" fill="none" stroke="#6c7377" stroke-width="1.100"/></svg>
<div style="position:absolute;top:1045.5px;font-size:15px;line-height:20px;color:#fff;white-space:pre;letter-spacing:-1.168px;left:1737.0px;">ENG</div>
<div style="position:absolute;top:1033.5px;font-size:15px;line-height:20px;color:#fff;white-space:pre;letter-spacing:-0.485px;left:1790.0px;">11:10</div>
<div style="position:absolute;top:1035.0px;font-size:14px;line-height:18px;color:#fff;white-space:pre;left:1828.0px;">م</div>
<div style="position:absolute;top:1058.0px;font-size:13px;line-height:17px;color:#fff;white-space:pre;left:1782.0px;width:64px;">٢٠٢٥/٠٩/١٠</div>
<svg style="position:absolute;left:1866px;top:1043px;" width="30" height="26" viewBox="0 0 30 26"><path d="M3.500 1.500h20.500v15H9.500L3.500 22z" fill="#fff"/><path d="M7 6h13M7 9.500h13M7 13h9" stroke="#1e272c" stroke-width="1.100"/><circle cx="21.500" cy="21.800" r="8.500" fill="#1a2227" stroke="#9a9a9a" stroke-width="1"/></svg>
<div style="position:absolute;top:1058.0px;font-size:11px;line-height:14px;color:#fff;white-space:pre;font-weight:bold;left:1884.0px;">٢</div>
<div style="position:absolute;left:1912px;top:1030px;width:1px;height:50px;background:#6a6f72;"></div>
<div style="position:absolute;left:0px;top:199.5px;width:1920px;height:1px;background:#dcdad8;"></div>
<div style="position:absolute;left:0px;top:200.5px;width:1920px;height:5px;background:linear-gradient(rgba(0,0,0,0.085),rgba(0,0,0,0));"></div>
</body></html>
